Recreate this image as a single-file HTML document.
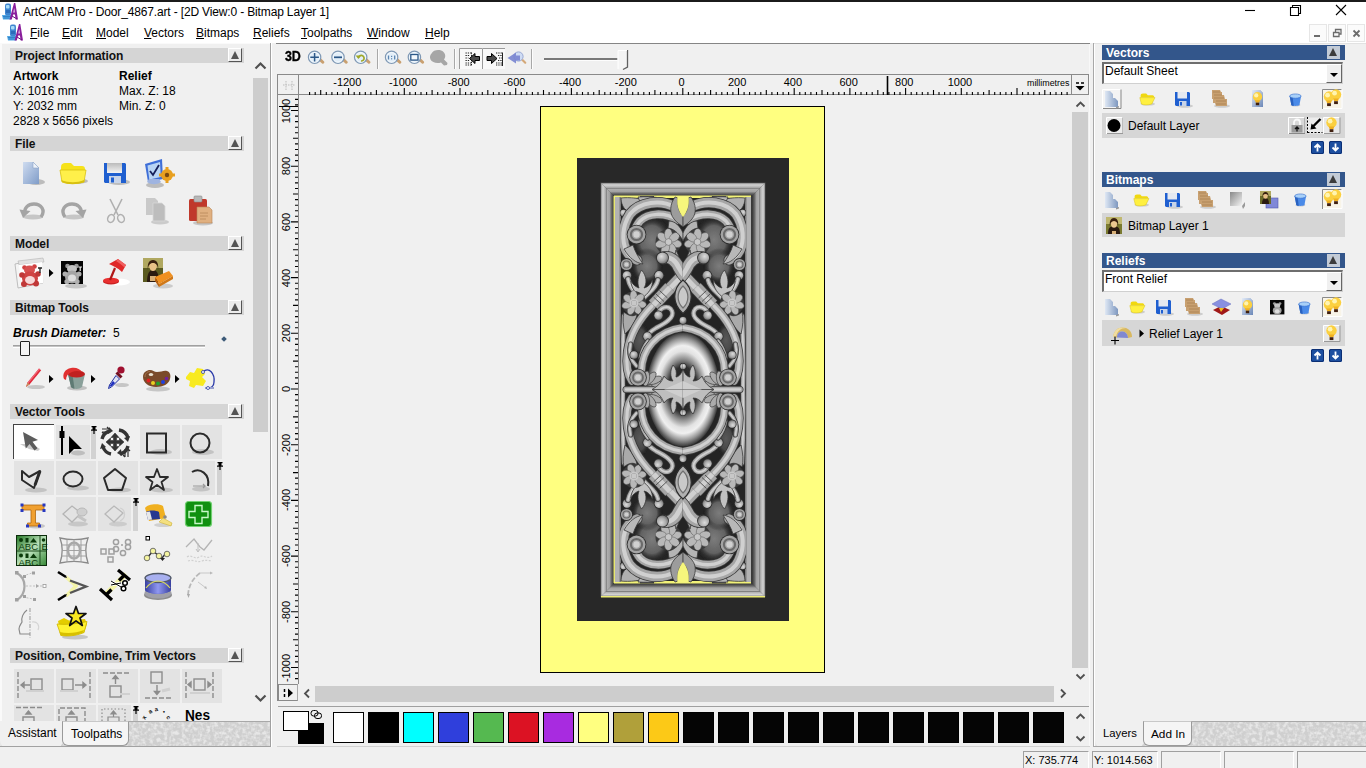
<!DOCTYPE html>
<html><head><meta charset="utf-8"><title>ArtCAM Pro - Door_4867.art</title>
<style>
*{box-sizing:border-box;margin:0;padding:0}
html,body{width:1366px;height:768px;overflow:hidden;background:#f0f0f0;font-family:"Liberation Sans",sans-serif;font-size:12px;color:#000}
div,span,svg{position:absolute}
.t{white-space:nowrap;line-height:14px;height:14px}
.b{font-weight:bold}
.hd{background:#d5d5d5;height:15px}
.hd .t{left:5px;top:1px;font-weight:bold;color:#111;letter-spacing:-0.1px}
.cb{width:14px;height:14px;background:#ececec;border-right:1px solid #555;border-bottom:1px solid #555;border-left:1px solid #fff;border-top:1px solid #fff}
.cb:after{content:"";position:absolute;left:2px;top:2px;border-left:4px solid transparent;border-right:4px solid transparent;border-bottom:8px solid #555}
.cell{background:#e3e3e3}
.pin{background:#d2d2d2;width:5px}
.rh{background:#33568b;height:15px}
.rh .t{left:4px;top:1px;font-weight:bold;color:#fff}
.rcb{width:13px;height:13px;background:#c3cbd6;left:225px;top:1px}
.rcb:after{content:"";position:absolute;left:2px;top:2px;border-left:4.5px solid transparent;border-right:4.5px solid transparent;border-bottom:8px solid #3c3c3c}
.dd{background:#fff;border:1px solid #d0d0d0;border-top:2px solid #6e6e6e;border-left:2px solid #6e6e6e;height:22px}
.ddb{width:16px;height:19px;right:0px;top:0px;background:#f0f0f0;border-right:1px solid #666;border-bottom:1px solid #666;border-left:1px solid #fff;border-top:1px solid #fff}
.ddb:after{content:"";position:absolute;left:3px;top:8px;border-left:4px solid transparent;border-right:4px solid transparent;border-top:4px solid #000}
.lr{background:#d6d6d6}
.sw{width:31px;height:31px;border:1px solid #000;top:712px}
.sb{border:1px solid #fff;border-top-color:#a0a0a0;border-left-color:#a0a0a0}
.rt{font-size:11px;line-height:12px;height:12px;white-space:nowrap;text-align:center;width:40px}
.tab{font-size:12.5px;line-height:14px;white-space:nowrap}
</style></head><body>

<div style="left:0px;top:0px;width:1366px;height:2px;background:#1b1b1b"></div>
<div style="left:0px;top:2px;width:1366px;height:41px;background:#fff"></div>
<svg style="left:2px;top:3px" width="16" height="17" viewBox="0 0 16 17"><path d="M0 12h9v4.500h-8z" fill="#52a8e4"/><path d="M1 13.500h7M1.500 15h6" stroke="#2c78c0" stroke-width="0.800"/><rect x="3" y="0.500" width="6" height="12" rx="2" fill="#3f86d0"/><rect x="4" y="2" width="3.500" height="3.500" rx="1" fill="#a8dcf8"/><rect x="4" y="7" width="4" height="3" fill="#2c6cb8"/><path d="M7.500 16.500L12 0h1.300L16 16.500h-2.300l-0.800-5h-1.800l-1.300 5z" fill="#8a1f9c"/><path d="M11.400 9.500h1.300l-0.500-4.500z" fill="#fff"/><path d="M10 13l5 3" stroke="#6a1080" stroke-width="1"/></svg>
<svg style="left:7px;top:24px" width="16" height="17" viewBox="0 0 16 17"><path d="M0 12h9v4.500h-8z" fill="#52a8e4"/><path d="M1 13.500h7M1.500 15h6" stroke="#2c78c0" stroke-width="0.800"/><rect x="3" y="0.500" width="6" height="12" rx="2" fill="#3f86d0"/><rect x="4" y="2" width="3.500" height="3.500" rx="1" fill="#a8dcf8"/><rect x="4" y="7" width="4" height="3" fill="#2c6cb8"/><path d="M7.500 16.500L12 0h1.300L16 16.500h-2.300l-0.800-5h-1.800l-1.300 5z" fill="#8a1f9c"/><path d="M11.400 9.500h1.300l-0.500-4.500z" fill="#fff"/><path d="M10 13l5 3" stroke="#6a1080" stroke-width="1"/></svg>
<div class="t" style="left:23px;top:5px;letter-spacing:-0.15px">ArtCAM Pro - Door_4867.art - [2D View:0 - Bitmap Layer 1]</div>
<div class="t" style="left:30px;top:26px"><u>F</u>ile</div>
<div class="t" style="left:62px;top:26px"><u>E</u>dit</div>
<div class="t" style="left:96px;top:26px"><u>M</u>odel</div>
<div class="t" style="left:144px;top:26px"><u>V</u>ectors</div>
<div class="t" style="left:196px;top:26px"><u>B</u>itmaps</div>
<div class="t" style="left:253px;top:26px"><u>R</u>eliefs</div>
<div class="t" style="left:301px;top:26px"><u>T</u>oolpaths</div>
<div class="t" style="left:367px;top:26px"><u>W</u>indow</div>
<div class="t" style="left:425px;top:26px"><u>H</u>elp</div>
<svg style="left:1240px;top:2px" width="120" height="20" viewBox="0 0 120 20"><g fill="none" stroke="#000" stroke-width="1.1"><path d="M5 8.5h10"/><path d="M50.500 5.500h8v8h-8z M52.500 5.500v-2h8v8h-2"/><path d="M96 3l10 10M106 3l-10 10"/></g></svg>
<div style="left:1309px;top:24px;width:18px;height:18px;background:#fbfbfb;border:1px solid #e6e6e6"></div>
<div style="left:1328px;top:24px;width:18px;height:18px;background:#fbfbfb;border:1px solid #e6e6e6"></div>
<div style="left:1347px;top:24px;width:18px;height:18px;background:#fbfbfb;border:1px solid #e6e6e6"></div>
<svg style="left:1309px;top:24px" width="57" height="18" viewBox="0 0 57 18"><g fill="none" stroke="#6c6c6c"><path d="M5 12h6" stroke-width="2"/><path d="M24.500 8.5h5.5v4h-5.5z M26.5 8v-2.500h5.5v4.500h-1.500" stroke-width="1.300"/><path d="M44.500 6.500l6 6M50.500 6.500l-6 6" stroke-width="1.800"/></g></svg>
<div style="left:0px;top:43px;width:271px;height:705px;background:#f0f0f0"></div>
<div style="left:0px;top:43px;width:271px;height:1px;background:#fafafa"></div>
<div style="left:0px;top:44px;width:1.5px;height:703px;background:#fafafa"></div>
<div class="hd" style="left:10px;top:48px;width:234px;height:15px;"><div class="t">Project Information</div><div class="cb" style="left:218px;top:0px"></div></div>
<div class="hd" style="left:10px;top:136px;width:234px;height:15px;"><div class="t">File</div><div class="cb" style="left:218px;top:0px"></div></div>
<div class="hd" style="left:10px;top:236px;width:234px;height:15px;"><div class="t">Model</div><div class="cb" style="left:218px;top:0px"></div></div>
<div class="hd" style="left:10px;top:300px;width:234px;height:15px;"><div class="t">Bitmap Tools</div><div class="cb" style="left:218px;top:0px"></div></div>
<div class="hd" style="left:10px;top:404px;width:234px;height:15px;"><div class="t">Vector Tools</div><div class="cb" style="left:218px;top:0px"></div></div>
<div class="hd" style="left:10px;top:648px;width:234px;height:15px;"><div class="t">Position, Combine, Trim Vectors</div><div class="cb" style="left:218px;top:0px"></div></div>
<div class="t b" style="left:13px;top:69px">Artwork</div><div class="t b" style="left:119px;top:69px">Relief</div>
<div class="t" style="left:13px;top:84px">X: 1016 mm</div><div class="t" style="left:119px;top:84px">Max. Z: 18</div>
<div class="t" style="left:13px;top:99px">Y: 2032 mm</div><div class="t" style="left:119px;top:99px">Min. Z: 0</div>
<div class="t" style="left:13px;top:114px">2828 x 5656 pixels</div>
<div class="t b" style="left:13px;top:326px;font-style:italic">Brush Diameter:</div><div class="t" style="left:113px;top:326px">5</div>
<div style="left:13px;top:345px;width:192px;height:3px;background:#c4c4c4;border-top:1px solid #a0a0a0;border-bottom:1px solid #fff"></div>
<div style="left:20px;top:341px;width:10px;height:15px;background:#f4f4f4;border:1px solid #222;border-radius:1px"></div>
<div style="left:222px;top:337px;width:4px;height:4px;background:#3c5a78;transform:rotate(45deg)"></div>
<div style="left:252px;top:48px;width:17px;height:672px;background:#f0f0f0"></div>
<div style="left:253px;top:78px;width:15px;height:354px;background:#cdcdcd"></div>
<svg style="left:252px;top:57px" width="17" height="17" viewBox="0 0 17 17"><path d="M3.500 11.500l5-5l5 5" fill="none" stroke="#505050" stroke-width="2.200"/></svg>
<svg style="left:252px;top:690px" width="17" height="17" viewBox="0 0 17 17"><path d="M3.500 5.500l5 5l5-5" fill="none" stroke="#505050" stroke-width="2.200"/></svg>
<div style="left:13px;top:424px;width:41px;height:35px;background:#fff;border-left:1px solid #444;border-top:1px solid #444"></div>
<div class="cell" style="left:56px;top:425px;width:34px;height:34px;"></div>
<div class="pin" style="left:91px;top:431px;width:5px;height:28px;"></div>
<div class="cell" style="left:140px;top:425px;width:40px;height:34px;"></div>
<div class="cell" style="left:182px;top:425px;width:40px;height:34px;"></div>
<div class="cell" style="left:14px;top:461px;width:40px;height:34px;"></div>
<div class="cell" style="left:56px;top:461px;width:40px;height:34px;"></div>
<div class="cell" style="left:98px;top:461px;width:40px;height:34px;"></div>
<div class="cell" style="left:140px;top:461px;width:40px;height:34px;"></div>
<div class="cell" style="left:182px;top:461px;width:33px;height:34px;"></div>
<div class="pin" style="left:217px;top:467px;width:5px;height:28px;"></div>
<div class="cell" style="left:56px;top:497px;width:40px;height:34px;"></div>
<div class="cell" style="left:98px;top:497px;width:33px;height:34px;"></div>
<div class="pin" style="left:133px;top:503px;width:5px;height:28px;"></div>
<div class="cell" style="left:14px;top:669px;width:40px;height:34px;"></div>
<div class="cell" style="left:56px;top:669px;width:40px;height:34px;"></div>
<div class="cell" style="left:98px;top:669px;width:40px;height:34px;"></div>
<div class="cell" style="left:140px;top:669px;width:40px;height:34px;"></div>
<div class="cell" style="left:182px;top:669px;width:40px;height:34px;"></div>
<div class="cell" style="left:14px;top:705px;width:40px;height:16px;"></div>
<div class="cell" style="left:56px;top:705px;width:40px;height:16px;"></div>
<div class="cell" style="left:98px;top:705px;width:33px;height:16px;"></div>
<div class="pin" style="left:133px;top:711px;width:5px;height:10px;"></div>
<svg style="left:18px;top:158px" width="30" height="30" viewBox="0 0 30 30"><ellipse cx="18" cy="24" rx="9" ry="3" fill="#888" opacity="0.5"/><path d="M5 4h10l6 6v16h-16z" fill="#a9bddb"/><path d="M5 4h10l6 6v16h-16z" fill="url(#gnew)"/><path d="M15 4v6h6z" fill="#eef3fa" stroke="#8fa6c8" stroke-width="0.600"/><defs><linearGradient id="gnew" x1="0" y1="0" x2="1" y2="1"><stop offset="0" stop-color="#cfdcf0"/><stop offset="1" stop-color="#7f9cc8"/></linearGradient></defs></svg>
<svg style="left:58px;top:158px" width="32" height="30" viewBox="0 0 32 30"><ellipse cx="18" cy="23" rx="12" ry="3" fill="#888" opacity="0.5"/><path d="M3 9c0-3 2-4 4-4h6l3 3h8c2 0 3 1 3 3v2h-24z" fill="#f6e21a"/><path d="M2 12h26l-2 12c-8 2-16 2-22 0z" fill="#fff04a" stroke="#d8c010" stroke-width="0.800"/><path d="M3 22c8 3 16 3 23 0l0.300 2c-8 3-16 3-22 0z" fill="#d8c010"/></svg>
<svg style="left:100px;top:158px" width="32" height="30" viewBox="0 0 32 30"><ellipse cx="19" cy="24" rx="11" ry="3" fill="#888" opacity="0.5"/><path d="M4 5h21l1 1v19h-21l-1-1z" fill="#1f5fd0"/><rect x="7" y="5" width="15" height="10" fill="#e4e4e4"/><rect x="7" y="5" width="15" height="10" fill="url(#gsv)"/><rect x="9" y="18" width="12" height="7" fill="#c8d4e8"/><rect x="11" y="19.500" width="3" height="5" fill="#1f5fd0"/><defs><linearGradient id="gsv" x1="0" y1="0" x2="0" y2="1"><stop offset="0" stop-color="#bbb"/><stop offset="1" stop-color="#f4f4f4"/></linearGradient></defs></svg>
<svg style="left:141px;top:156px" width="34" height="34" viewBox="0 0 34 34"><ellipse cx="14" cy="29" rx="9" ry="3" fill="#888" opacity="0.5"/><path d="M4 8l17-5l1 20l-15 3z" fill="#3f6fd8"/><path d="M6.500 9.500l12.500-3.500l0.800 15l-11.500 2.500z" fill="#b8d4f4"/><path d="M9 15l3 4l6-10" fill="none" stroke="#16205a" stroke-width="1.800"/><path d="M6 26c4 3 10 3 14 0l-2-3h-10z" fill="#9fb4e0"/><circle cx="26" cy="19" r="6" fill="#e8a020"/><circle cx="26" cy="19" r="2.200" fill="#7a4a10"/><g fill="#e8a020"><rect x="24.500" y="11" width="3" height="3"/><rect x="24.500" y="24" width="3" height="3"/><rect x="18" y="17.500" width="3" height="3"/><rect x="31" y="17.500" width="3" height="3"/></g></svg>
<svg style="left:18px;top:198px" width="30" height="26" viewBox="0 0 30 26"><ellipse cx="15" cy="19" rx="10" ry="2.5" fill="#888" opacity="0.4"/><path d="M23 19c5-7 0-13-7-13c-6 0-10 4-9 9" fill="none" stroke="#a4a4a4" stroke-width="3.400"/><path d="M1.500 11.500l11 1.500l-7.500 7z" fill="#a4a4a4"/></svg>
<svg style="left:58px;top:198px" width="30" height="26" viewBox="0 0 30 26"><ellipse cx="16" cy="19" rx="10" ry="2.5" fill="#888" opacity="0.4"/><path d="M7 19c-5-7 0-13 7-13c6 0 10 4 9 9" fill="none" stroke="#a4a4a4" stroke-width="3.400"/><path d="M28.500 11.500l-11 1.500l7.500 7z" fill="#a4a4a4"/></svg>
<svg style="left:102px;top:196px" width="28" height="30" viewBox="0 0 28 30"><path d="M8 3l8 16M20 3l-8 16" stroke="#b0b0b0" stroke-width="1.600" fill="none"/><ellipse cx="9" cy="22.500" rx="3.200" ry="4" fill="none" stroke="#b0b0b0" stroke-width="1.500" transform="rotate(25 9 22.500)"/><ellipse cx="19" cy="22.500" rx="3.200" ry="4" fill="none" stroke="#b0b0b0" stroke-width="1.500" transform="rotate(-25 19 22.500)"/></svg>
<svg style="left:142px;top:195px" width="30" height="30" viewBox="0 0 30 30"><ellipse cx="18" cy="27" rx="9" ry="2.5" fill="#888" opacity="0.35"/><path d="M4 3h9l3 3v14h-12z" fill="#c9c9c9"/><path d="M11 8h9l3 3v15h-12z" fill="#bdbdbd" stroke="#d8d8d8" stroke-width="0.800"/></svg>
<svg style="left:186px;top:194px" width="30" height="32" viewBox="0 0 30 32"><ellipse cx="17" cy="29" rx="10" ry="2.5" fill="#888" opacity="0.4"/><rect x="3" y="5" width="18" height="22" rx="1.500" fill="#c0392b"/><rect x="8" y="2" width="8" height="6" rx="1" fill="#b8b8b8" stroke="#8a8a8a" stroke-width="0.600"/><path d="M11 13h12l3 3v13h-15z" fill="#e0b080" stroke="#b88858" stroke-width="0.600"/><path d="M14 19h8M14 22h8M14 25h6" stroke="#b88858" stroke-width="0.800"/></svg>
<svg style="left:12px;top:256px" width="44" height="34" viewBox="0 0 44 34"><path d="M3 8l26-5l2 24l-25 5z" fill="#f4f4f4" stroke="#b0b0b0" stroke-width="0.800"/><path d="M6 5l25-3l1 4l-25 3z" fill="#e2e2e2" stroke="#aaa" stroke-width="0.500"/><path d="M7 9l23-3l1.500 21l-22 3z" fill="#fff"/><circle cx="12.500" cy="11.500" r="2.300" fill="#d04040"/><circle cx="22.500" cy="10.500" r="2.300" fill="#d04040"/><ellipse cx="17.500" cy="14" rx="5.500" ry="4.500" fill="#d85050"/><ellipse cx="18" cy="22.500" rx="8" ry="7" fill="#d04444"/><circle cx="10" cy="19" r="2.800" fill="#c03838"/><circle cx="26" cy="18" r="2.800" fill="#c03838"/><circle cx="12" cy="28" r="3" fill="#c03838"/><circle cx="24" cy="27.500" r="3" fill="#c03838"/><ellipse cx="18" cy="24" rx="5" ry="4" fill="#f6d8d8"/><path d="M26 12h4M28 12v5" stroke="#222" stroke-width="1.300"/><g transform="translate(37,13)"><path d="M0 0l4.500 4l-4.500 4z" fill="#000"/></g></svg>
<svg style="left:60px;top:259px" width="28" height="30" viewBox="0 0 28 30"><ellipse cx="16" cy="27" rx="11" ry="2.5" fill="#888" opacity="0.4"/><rect x="1" y="2" width="22" height="23" fill="#050505"/><circle cx="7.500" cy="7" r="2.300" fill="#9a9a9a"/><circle cx="16.500" cy="7" r="2.300" fill="#9a9a9a"/><ellipse cx="12" cy="10" rx="5" ry="4" fill="#c4c4c4"/><ellipse cx="12" cy="18" rx="7" ry="6.500" fill="#a4a4a4"/><circle cx="5" cy="15" r="2.500" fill="#b0b0b0"/><circle cx="19" cy="15" r="2.500" fill="#b0b0b0"/><circle cx="7" cy="22.500" r="2.600" fill="#b0b0b0"/><circle cx="17" cy="22.500" r="2.600" fill="#b0b0b0"/><ellipse cx="12" cy="19" rx="4" ry="3.500" fill="#ddd"/><path d="M18.500 8h3.500M20.200 8v4" stroke="#eee" stroke-width="1.200"/></svg>
<svg style="left:98px;top:257px" width="34" height="32" viewBox="0 0 34 32"><ellipse cx="20" cy="25" rx="12" ry="3.500" fill="#fff"/><ellipse cx="13" cy="24.500" rx="8" ry="3" fill="#c82020"/><ellipse cx="13" cy="23.500" rx="8" ry="2.800" fill="#e83030"/><path d="M12 23l5-12" stroke="#b01818" stroke-width="2.200"/><path d="M11 7l9-5l8 6l-4 7c-4-4-9-6-13-8z" fill="#e02828"/><path d="M20 2l8 6l-1.500 2.500c-3-3-6-5-8.500-6.500z" fill="#f06060"/></svg>
<svg style="left:141px;top:256px" width="34" height="34" viewBox="0 0 34 34"><ellipse cx="22" cy="30" rx="10" ry="2.5" fill="#888" opacity="0.35"/><rect x="2" y="2" width="20" height="24" fill="#5a5a20"/><rect x="2" y="2" width="20" height="10" fill="#b0a860"/><path d="M6 26c0-8 2-12 6-12s6 4 6 12z" fill="#2a1a10"/><ellipse cx="12" cy="10.500" rx="3.600" ry="4.600" fill="#e8c088"/><path d="M7 14c-1-6 1-10 5-10s6 4 5 10c0-5-2-7-5-7s-5 2-5 7z" fill="#3a2010"/><path d="M9 20h6v5h-6z" fill="#d8b078"/><path d="M14 21l14-6l4 5l-14 8z" fill="#f09020"/><path d="M14 21l4 7l0 3l-4-6z" fill="#b86010"/><path d="M18 28l14-8v3l-14 8z" fill="#d07818"/></svg>
<svg style="left:20px;top:365px" width="36" height="28" viewBox="0 0 36 28"><ellipse cx="16" cy="22" rx="9" ry="2" fill="#888" opacity="0.4"/><path d="M6 22l1.500-4.500l11.500-14l2.200 1.800l-11.500 14z" fill="#e02838"/><path d="M6 22l1.500-4.500l2.200 1.800z" fill="#c89060"/><path d="M7.500 17.500l11.500-14l1 0.800l-11.500 14z" fill="#f06878"/><g transform="translate(29,10)"><path d="M0 0l4.500 4l-4.500 4z" fill="#000"/></g></svg>
<svg style="left:60px;top:365px" width="38" height="28" viewBox="0 0 38 28"><ellipse cx="17" cy="23" rx="10" ry="2.5" fill="#888" opacity="0.45"/><path d="M8 9l3 13c3 2.500 8 2.500 11 0l3-13z" fill="#8aa09a"/><path d="M8 9l3 13c1 1 2 1.500 3.500 1.800l-2-14z" fill="#5f7a74"/><ellipse cx="16.500" cy="9" rx="8.500" ry="3.500" fill="#c02020"/><path d="M4 14c-2-5 1-10 7-11c5-1 9 1 11 4c-3-1.500-7-1.500-10 0c-4 1.500-6 4-6 8z" fill="#e03030"/><g transform="translate(31,10)"><path d="M0 0l4.500 4l-4.500 4z" fill="#000"/></g></svg>
<svg style="left:104px;top:363px" width="28" height="30" viewBox="0 0 28 30"><ellipse cx="18" cy="22" rx="7" ry="2" fill="#888" opacity="0.4"/><circle cx="17" cy="7" r="3.600" fill="#a01030"/><path d="M12.500 9.500l5 5" stroke="#701020" stroke-width="3"/><path d="M12 12.500l3.500 3.500l-8 8l-3 1.500l1-3.500z" fill="#e0e4f4" stroke="#2030a0" stroke-width="1"/><path d="M5 24l3-1l3-3l-2-2z" fill="#2030c0"/></svg>
<svg style="left:140px;top:365px" width="44" height="28" viewBox="0 0 44 28"><ellipse cx="18" cy="24" rx="12" ry="2.5" fill="#888" opacity="0.4"/><path d="M3 12c0-5 4-7 7-7c3 0 4 2 7 2c4 0 7-2 10-1c3 1 4 4 3 8c-1 5-7 8-14 8c-7 0-13-4-13-10z" fill="#7a4a2a"/><path d="M5 12c0-4 3-5.500 5-5.500" fill="none" stroke="#a87850" stroke-width="1"/><circle cx="8.500" cy="15.500" r="2" fill="#e02020"/><circle cx="13" cy="18" r="2" fill="#e8d020"/><circle cx="18" cy="18.500" r="2" fill="#20a030"/><circle cx="23" cy="17" r="2" fill="#2040e0"/><circle cx="26.500" cy="13.500" r="1.800" fill="#7020a0"/><ellipse cx="11" cy="9.500" rx="2.200" ry="1.600" fill="#e8e0d0"/><g transform="translate(35,10)"><path d="M0 0l4.500 4l-4.500 4z" fill="#000"/></g></svg>
<svg style="left:183px;top:364px" width="34" height="30" viewBox="0 0 34 30"><path d="M20 8c6-6 12 2 11 10c0 4-3 6-6 6" fill="none" stroke="#2838a8" stroke-width="1.300"/><path d="M22 24h9" stroke="#98a0d0" stroke-width="2"/><path d="M3 13l4-5l4 1l3-5l6 1l2 5l-3 3l4 4l-3 5l-7-1l-2 3l-5-2l1-5l-4-2z" fill="#f8ea20"/><circle cx="20" cy="8" r="1.500" fill="#fff" stroke="#2838a8" stroke-width="0.800"/><circle cx="25" cy="24" r="1.500" fill="#fff" stroke="#2838a8" stroke-width="0.800"/></svg>
<svg style="left:16px;top:428px" width="28" height="28" viewBox="0 0 28 28"><path d="M4 16l9 5l9 2l2-2l-8-5z" fill="#b4b4b4" opacity="0.700"/><path d="M7 4l15 8l-5.500 1.700l5 6.500l-3 2.300l-5-6.500l-3.700 4.500z" fill="#5c5c5c"/></svg>
<svg style="left:56px;top:425px" width="36" height="34" viewBox="0 0 36 34"><ellipse cx="22" cy="28" rx="7" ry="2.5" fill="#888" opacity="0.4"/><path d="M6 1v29" stroke="#000" stroke-width="2"/><rect x="3.500" y="6" width="5" height="7" fill="#000"/><path d="M13 11v18l5-5h8z" fill="#000"/></svg>
<svg style="left:91px;top:426px" width="7" height="8" viewBox="0 0 7 8"><path d="M0.500 0h5v1.200h-1v2.300h1.500v1.300h-2.400v3.200h-1.200v-3.200h-2.400v-1.300h1.500v-2.300h-1z" fill="#000"/></svg>
<svg style="left:97px;top:425px" width="36" height="34" viewBox="0 0 36 34"><g fill="none" stroke="#333" stroke-width="3.400"><path d="M5 14a11 11 0 0 1 8-8"/><path d="M22 5a11 11 0 0 1 9 8"/><path d="M31 21a11 11 0 0 1-8 8"/><path d="M14 29a11 11 0 0 1-8-7"/></g><g fill="#333"><path d="M12 2l4 4l-5 3z"/><path d="M33 11l-2 6l-4-4z"/><path d="M25 31l-5-3l4-4z"/><path d="M3 24l2-6l4 4z"/></g><path d="M18 8l4 4.500h-2.500v3h3v-2.500l4.500 4l-4.500 4v-2.500h-3v3h2.500l-4 4.500l-4-4.500h2.500v-3h-3v2.500l-4.500-4l4.500-4v2.500h3v-3h-2.500z" fill="#333" stroke="#333" stroke-width="0.600"/><path d="M5 4h7M12 4l-2-2M5 7h7M5 7l2 2" stroke="#333" stroke-width="1.200" fill="none"/><path d="M28 24v8M28 32l-2-2M31 24v8M31 24l2 2" stroke="#333" stroke-width="1.200" fill="none"/></svg>
<svg style="left:142px;top:429px" width="36" height="28" viewBox="0 0 36 28"><ellipse cx="19" cy="23" rx="11" ry="3" fill="#888" opacity="0.35"/><rect x="5" y="4.500" width="19" height="19" fill="none" stroke="#2a2a2a" stroke-width="2"/></svg>
<svg style="left:184px;top:429px" width="36" height="28" viewBox="0 0 36 28"><ellipse cx="19" cy="23" rx="11" ry="3" fill="#888" opacity="0.35"/><circle cx="16" cy="14" r="9.500" fill="none" stroke="#2a2a2a" stroke-width="2"/></svg>
<svg style="left:16px;top:465px" width="36" height="30" viewBox="0 0 36 30"><ellipse cx="20" cy="25" rx="11" ry="2.5" fill="#888" opacity="0.35"/><path d="M6 6l7 6l11-6l-6 17l-12-8z" fill="none" stroke="#2a2a2a" stroke-width="2" stroke-linejoin="round"/><path d="M24 6l-5 14" stroke="#2a2a2a" stroke-width="3"/></svg>
<svg style="left:58px;top:465px" width="36" height="30" viewBox="0 0 36 30"><ellipse cx="20" cy="23" rx="11" ry="2.5" fill="#888" opacity="0.35"/><ellipse cx="15" cy="14" rx="9.500" ry="7.500" fill="none" stroke="#2a2a2a" stroke-width="2"/></svg>
<svg style="left:100px;top:465px" width="36" height="30" viewBox="0 0 36 30"><ellipse cx="20" cy="25" rx="11" ry="2.5" fill="#888" opacity="0.35"/><path d="M15 4l11 9l-4 12h-14l-4-12z" fill="none" stroke="#2a2a2a" stroke-width="2" stroke-linejoin="round"/></svg>
<svg style="left:142px;top:465px" width="36" height="30" viewBox="0 0 36 30"><ellipse cx="20" cy="25" rx="11" ry="2.5" fill="#888" opacity="0.35"/><path d="M15 4l3 8h8l-6.500 5l2.500 8l-7-5l-7 5l2.500-8l-6.500-5h8z" fill="none" stroke="#2a2a2a" stroke-width="1.800" stroke-linejoin="round"/></svg>
<svg style="left:184px;top:465px" width="32" height="30" viewBox="0 0 32 30"><ellipse cx="17" cy="24" rx="9" ry="2.5" fill="#888" opacity="0.35"/><path d="M8 7c8-5 18 2 16 14" fill="none" stroke="#2a2a2a" stroke-width="2"/><path d="M9 21h12l-2-2M21 21l-2 2" stroke="#999" stroke-width="1.200" fill="none"/></svg>
<svg style="left:217px;top:462px" width="7" height="8" viewBox="0 0 7 8"><path d="M0.500 0h5v1.200h-1v2.300h1.500v1.300h-2.400v3.200h-1.200v-3.200h-2.400v-1.300h1.500v-2.300h-1z" fill="#000"/></svg>
<svg style="left:16px;top:500px" width="36" height="30" viewBox="0 0 36 30"><ellipse cx="20" cy="26" rx="9" ry="2.5" fill="#888" opacity="0.4"/><path d="M6 5h22v5h-8.500v13h4v3h-12v-3h3.500v-13h-9z" fill="#f0a030" stroke="#b06810" stroke-width="0.800"/><g fill="#2838c0"><rect x="4.500" y="3.500" width="3" height="3"/><rect x="26.500" y="3.500" width="3" height="3"/><rect x="4.500" y="9" width="3" height="3"/><rect x="26.500" y="9" width="3" height="3"/><rect x="10" y="24.500" width="3" height="3"/><rect x="22" y="24.500" width="3" height="3"/></g></svg>
<svg style="left:58px;top:500px" width="36" height="30" viewBox="0 0 36 30"><ellipse cx="20" cy="24" rx="10" ry="2.5" fill="#888" opacity="0.3"/><path d="M5 14l9-8l9 7l-9 9z" fill="none" stroke="#b4b4b4" stroke-width="1.300"/><ellipse cx="24" cy="12" rx="5" ry="4" fill="#cfcfcf" stroke="#b8b8b8"/><path d="M20 16l8 5" stroke="#c4c4c4" stroke-width="3"/></svg>
<svg style="left:100px;top:500px" width="32" height="30" viewBox="0 0 32 30"><ellipse cx="18" cy="24" rx="9" ry="2.5" fill="#888" opacity="0.25"/><path d="M5 14l9-8l9 7l-9 9z" fill="none" stroke="#b8b8b8" stroke-width="1.300"/><path d="M20 8c6 2 6 10 0 13" fill="none" stroke="#d0d0d0" stroke-width="1.300"/></svg>
<svg style="left:133px;top:498px" width="7" height="8" viewBox="0 0 7 8"><path d="M0.500 0h5v1.200h-1v2.300h1.500v1.300h-2.400v3.200h-1.200v-3.200h-2.400v-1.300h1.500v-2.300h-1z" fill="#000"/></svg>
<svg style="left:141px;top:500px" width="34" height="30" viewBox="0 0 34 30"><ellipse cx="22" cy="25" rx="9" ry="2" fill="#888" opacity="0.3"/><path d="M4 8c2-4 14-5 18-2l3 12l-17 3z" fill="#f0b020"/><path d="M5 12c3-2 10-2 13 0l1 7l-12 1z" fill="#283890"/><path d="M5 12l2 8l4-0.500l-2-8z" fill="#e8e8e8"/><path d="M22 18l9 5l-1 3l-12-4z" fill="#f4e080" stroke="#c8a820" stroke-width="0.500"/><circle cx="24" cy="17" r="1.800" fill="#888"/></svg>
<svg style="left:184px;top:500px" width="30" height="28" viewBox="0 0 30 28"><rect x="1.500" y="1.500" width="26" height="25" rx="3" fill="#109010" stroke="#70d070" stroke-width="1.200"/><path d="M11 5.500h7v6h6v6h-6v6h-7v-6h-6v-6h6z" fill="none" stroke="#c8f8c8" stroke-width="1.400"/></svg>
<svg style="left:16px;top:535px" width="32" height="31" viewBox="0 0 32 31"><rect x="1" y="1" width="29" height="29" fill="#9fd09f"/><rect x="1" y="1" width="29" height="29" fill="url(#gabc)"/><path d="M1 16h29M24 1v29" stroke="#1a4a1a" stroke-width="1"/><g fill="#0a3a0a"><circle cx="5" cy="5" r="2"/><rect x="9.500" y="3" width="3" height="4.500"/><path d="M14 7.500l3.500-4.500l3.500 4.500z"/><circle cx="5" cy="20.500" r="2"/><rect x="9.500" y="18.500" width="3" height="4.500"/><path d="M14 23l3.500-4.500l3.500 4.500z"/><circle cx="27.500" cy="5" r="1.800"/></g><text x="2.500" y="15" font-family="Liberation Sans,sans-serif" font-size="9.500" fill="#0a3a0a">ABC</text><text x="2.500" y="31" font-family="Liberation Sans,sans-serif" font-size="9.500" fill="#0a3a0a">ABC</text><text x="25.500" y="15" font-family="Liberation Sans,sans-serif" font-size="9.500" fill="#0a3a0a">E</text><rect x="0.500" y="0.500" width="30" height="30" fill="none" stroke="#0c2c0c" stroke-width="1"/><defs><linearGradient id="gabc" x1="0" y1="0" x2="1" y2="1"><stop offset="0" stop-color="#2a7a2a"/><stop offset="0.5" stop-color="#b8e0b8"/><stop offset="1" stop-color="#3a8a3a"/></linearGradient></defs></svg>
<svg style="left:58px;top:535px" width="32" height="30" viewBox="0 0 32 30"><path d="M2 3c9 2 19 2 28 0c-3 8-3 16 0 25c-9-2-19-2-28 0c3-9 3-17 0-25z" fill="none" stroke="#8a8a8a" stroke-width="1.300"/><path d="M9 4v23M16 4.500v22M23 4v23M3 10h26M4 15.500h24M3 21h26" stroke="#9a9a9a" stroke-width="0.900"/><ellipse cx="16" cy="15.500" rx="6" ry="8" fill="none" stroke="#a8a8a8" stroke-width="2.400"/></svg>
<svg style="left:98px;top:535px" width="34" height="30" viewBox="0 0 34 30"><g fill="none" stroke="#a0a0a0" stroke-width="1.500"><rect x="3" y="14" width="5" height="5"/><rect x="11" y="14" width="5" height="5"/><rect x="10" y="22" width="5" height="5"/><circle cx="18" cy="7" r="2.600"/><circle cx="30" cy="7" r="2.600"/><circle cx="18" cy="14" r="2.600"/><circle cx="25" cy="18" r="2.600"/><circle cx="30" cy="12" r="2.600"/></g><circle cx="24" cy="10" r="1" fill="#a0a0a0"/></svg>
<svg style="left:141px;top:533px" width="34" height="32" viewBox="0 0 34 32"><rect x="5" y="3.500" width="3.500" height="3.500" fill="#fff" stroke="#000" stroke-width="1"/><path d="M6 25l6-7l6 5l3 2l5-6" fill="none" stroke="#333" stroke-width="1.500"/><g fill="#f4f4a0" stroke="#555" stroke-width="0.800"><circle cx="6" cy="25" r="2.800"/><circle cx="12" cy="18" r="2.800"/><circle cx="18" cy="23" r="2.800"/><circle cx="26" cy="21" r="2.800"/></g><path d="M19 25l2.500 3l2.500-3" fill="#222"/></svg>
<svg style="left:184px;top:535px" width="32" height="30" viewBox="0 0 32 30"><path d="M2 12l8-8l6 8l4 3l8-10" fill="none" stroke="#b4b4b4" stroke-width="1.300"/><path d="M14 8v8M12 14l2 3l2-3" stroke="#c0c0c0" stroke-width="1" fill="none"/><path d="M3 22c4-3 8 3 12 0s8 3 13-1M4 26c5-2 9 2 14 0s7 1 10-1" stroke="#d0d0d0" stroke-width="1.200" fill="none" stroke-dasharray="2 1.500"/></svg>
<svg style="left:14px;top:570px" width="36" height="32" viewBox="0 0 36 32"><path d="M3 3c10 6 10 20 0 27" fill="none" stroke="#a8a8a8" stroke-width="2.200"/><path d="M9 6l9-3M9 27l10 2M12 16h16" stroke="#c0c0c0" stroke-width="1" stroke-dasharray="2 1.500"/><g fill="#a0a0a0"><rect x="1" y="1" width="3.500" height="3.500"/><rect x="1" y="28" width="3.500" height="3.500"/><rect x="9" y="5" width="3" height="3"/><rect x="9" y="25" width="3" height="3"/><rect x="18" y="1.500" width="3" height="3"/><rect x="19" y="28" width="3" height="3"/></g><rect x="29" y="14.500" width="3" height="3" fill="#fff" stroke="#999" stroke-width="0.800"/><path d="M22 14l3 2l-3 2z" fill="#a8a8a8"/></svg>
<svg style="left:56px;top:570px" width="34" height="32" viewBox="0 0 34 32"><path d="M10 7l10 9l-10 10" stroke="#f4f4a8" stroke-width="3.500" fill="none"/><path d="M2 2l8 5M2 30l8-5" stroke="#000" stroke-width="2.600"/><path d="M10 7l2 2M10 25l2-2" stroke="#555" stroke-width="1" stroke-dasharray="1.500 1.500"/><path d="M14 10.500l16 6l-16 6.500" fill="none" stroke="#555" stroke-width="2.400" stroke-linejoin="miter"/></svg>
<svg style="left:98px;top:568px" width="36" height="34" viewBox="0 0 36 34"><path d="M8 26l20-20" stroke="#f4f4a8" stroke-width="5"/><path d="M2 21l12 11M20 2l12 10" stroke="#000" stroke-width="3.200"/><path d="M8 27l5.500-5.500M26.500 7l-5.500 5.500" stroke="#000" stroke-width="3.200"/><path d="M13 13l10 6M13 17l10-2" stroke="#fff" stroke-width="2.600"/><path d="M13 13l10 6M13 17l10-2" stroke="#000" stroke-width="1"/><circle cx="25.500" cy="20.500" r="2.300" fill="#fff" stroke="#000" stroke-width="1.500"/><circle cx="27" cy="15" r="2.300" fill="#fff" stroke="#000" stroke-width="1.500"/></svg>
<svg style="left:141px;top:570px" width="34" height="32" viewBox="0 0 34 32"><ellipse cx="17" cy="25" rx="14" ry="5" fill="#8c8c8c"/><ellipse cx="17" cy="23" rx="13.500" ry="5.500" fill="#a0a0a8"/><path d="M4 8v12c3 5 23 5 26 0v-12z" fill="#5058c8"/><path d="M4 8v12c3 5 23 5 26 0v-12z" fill="url(#gdish)"/><ellipse cx="17" cy="8" rx="13" ry="4.500" fill="#a8b0f0" stroke="#505868" stroke-width="1.300"/><path d="M5 18c4-5 8-7 12-7s8 2 12 7" fill="none" stroke="#d8d860" stroke-width="1.200"/><defs><linearGradient id="gdish" x1="0" x2="1"><stop offset="0" stop-color="#3840a0"/><stop offset="0.5" stop-color="#9098f0"/><stop offset="1" stop-color="#3840a0"/></linearGradient></defs></svg>
<svg style="left:184px;top:570px" width="32" height="32" viewBox="0 0 32 32"><path d="M16 3c-8 6-12 14-12 24" fill="none" stroke="#b8b8b8" stroke-width="1.800" stroke-dasharray="5 2"/><path d="M16 3h10M14 12l8 6" stroke="#c8c8c8" stroke-width="1" /><path d="M26 1.500l3 1.500l-3 1.500zM22 16l1 3l-3-1z" fill="#b8b8b8"/><path d="M3 24l1.500 4l1.500-4z" fill="#aaa"/></svg>
<svg style="left:16px;top:606px" width="30" height="32" viewBox="0 0 30 32"><path d="M14 2v30" stroke="#999" stroke-width="1" stroke-dasharray="4 1.500 1 1.500"/><path d="M11 4c-4 3-6 8-5 12c-1 2-3 4-3 7l1 5h10" fill="none" stroke="#8a8a8a" stroke-width="1.200"/><path d="M16 16c5-1 8 3 6 8" fill="none" stroke="#d4d4d4" stroke-width="1.200"/></svg>
<svg style="left:56px;top:604px" width="36" height="36" viewBox="0 0 36 36"><ellipse cx="19" cy="33" rx="13" ry="2.5" fill="#888" opacity="0.4"/><path d="M2 17l6-3l5 2.500l16-1.500l2 5l-3 9l-23 2z" fill="#e4cc00"/><path d="M1 20c9 1 20 0 30-2.500l-3 11c-8 3.500-17 4-23 3z" fill="#fff230" stroke="#cdb400" stroke-width="0.800"/><path d="M3.500 28c8 2 17 1 24.500-2l-0.600 2.600c-8 3.500-17 4-23 3z" fill="#d8c000"/><path d="M20 2.500l2.500 7h7.500l-6 4.500l2.300 7.500l-6.300-4.600l-6.300 4.600l2.300-7.500l-6-4.500h7.500z" fill="#f8e820" stroke="#111" stroke-width="1.700" stroke-linejoin="round"/></svg>
<svg style="left:14px;top:669px" width="40" height="34" viewBox="0 0 40 34"><g fill="none" stroke="#8c8c8c" stroke-width="1.400"><path d="M4 3v28" stroke-dasharray="5 2"/><rect x="17" y="10" width="11" height="11"/><path d="M7 16h9M7 16l3-2.500v5z" fill="#8c8c8c"/><path d="M12 22h18" stroke="#d0d0d0" stroke-width="2"/></g></svg>
<svg style="left:56px;top:669px" width="40" height="34" viewBox="0 0 40 34"><g fill="none" stroke="#8c8c8c" stroke-width="1.400"><path d="M34 3v28" stroke-dasharray="5 2"/><rect x="6" y="10" width="11" height="11"/><path d="M19 16h9M30 16l-3-2.500v5z" fill="#8c8c8c"/><path d="M4 22h18" stroke="#d0d0d0" stroke-width="2"/></g></svg>
<svg style="left:98px;top:669px" width="40" height="34" viewBox="0 0 40 34"><g fill="none" stroke="#8c8c8c" stroke-width="1.400"><path d="M5 4h26" stroke-dasharray="5 2"/><rect x="12" y="17" width="11" height="11"/><path d="M17.500 8v7M17.500 6.500l-2.500 3h5z" fill="#8c8c8c"/><path d="M22 25h10" stroke="#d0d0d0" stroke-width="2"/></g></svg>
<svg style="left:140px;top:669px" width="40" height="34" viewBox="0 0 40 34"><g fill="none" stroke="#8c8c8c" stroke-width="1.400"><path d="M5 29h26" stroke-dasharray="5 2"/><rect x="11" y="3" width="11" height="11"/><path d="M17 16v7M17 25.500l-2.500-3h5z" fill="#8c8c8c"/><path d="M22 22l8-2" stroke="#d0d0d0" stroke-width="3"/></g></svg>
<svg style="left:182px;top:669px" width="40" height="34" viewBox="0 0 40 34"><g fill="none" stroke="#8c8c8c" stroke-width="1.400"><path d="M4 3v28M31 3v28" stroke-dasharray="5 2"/><rect x="12" y="10" width="11" height="11"/><path d="M6 15.500l3-2.500v5zM29 15.500l-3-2.500v5z" fill="#8c8c8c"/><path d="M8 24h20" stroke="#d0d0d0" stroke-width="2"/></g></svg>
<svg style="left:14px;top:705px" width="40" height="16" viewBox="0 0 40 16"><g fill="none" stroke="#8c8c8c" stroke-width="1.400"><path d="M2 2.500h26" stroke-dasharray="5 2"/><path d="M14.500 6l-2.500 3h5z" fill="#8c8c8c"/><path d="M9 16v-4h11v4"/></g></svg>
<svg style="left:56px;top:705px" width="40" height="16" viewBox="0 0 40 16"><g fill="none" stroke="#8c8c8c" stroke-width="1.400"><path d="M3 16v-13h26v13" stroke-dasharray="5 2"/><path d="M15.500 6l-2.500 3h5z" fill="#8c8c8c"/><path d="M10 16v-4h11v4"/></g></svg>
<svg style="left:98px;top:705px" width="34" height="16" viewBox="0 0 34 16"><g fill="none" stroke="#8c8c8c" stroke-width="1.200"><path d="M4 16v-12h23v12" stroke-dasharray="1.500 2"/><path d="M15.500 6l-2.500 3h5zM15.500 9v3" fill="#8c8c8c"/><path d="M10 16v-4h11v4"/></g></svg>
<svg style="left:133px;top:706px" width="7" height="8" viewBox="0 0 7 8"><path d="M0.500 0h5v1.200h-1v2.300h1.500v1.300h-2.400v3.200h-1.200v-3.200h-2.400v-1.300h1.500v-2.300h-1z" fill="#000"/></svg>
<svg style="left:141px;top:705px" width="34" height="16" viewBox="0 0 34 16"><g fill="#111" font-family="Liberation Sans,sans-serif" font-size="6" font-weight="bold"><text x="9" y="9" transform="rotate(-35 9 9)">a</text><text x="14" y="6.500" transform="rotate(-10 14 6.500)">a</text><text x="21" y="8" transform="rotate(30 21 8)">•</text><text x="25" y="12" transform="rotate(60 25 12)">c</text><text x="4" y="15" transform="rotate(-60 4 15)">x</text></g></svg>
<svg style="left:184px;top:707px" width="32" height="16" viewBox="0 0 32 16"><text x="1" y="12.500" font-family="Liberation Sans,sans-serif" font-size="14" font-weight="bold" fill="#000" textLength="25" lengthAdjust="spacingAndGlyphs">Nes</text><text x="1" y="23" font-family="Liberation Sans,sans-serif" font-size="14" font-weight="bold" fill="#000" textLength="25" lengthAdjust="spacingAndGlyphs">Nes</text></svg>
<div style="left:0px;top:721px;width:271px;height:26px;background:#cfcfcf"><svg width="100%" height="100%" style="left:0;top:0"><filter id="nz" x="0" y="0" width="100%" height="100%"><feTurbulence type="fractalNoise" baseFrequency="0.28" numOctaves="2" seed="3"/><feColorMatrix type="matrix" values="0 0 0 0 1  0 0 0 0 1  0 0 0 0 1  3 0 0 0 -1.2"/></filter><rect width="100%" height="100%" filter="url(#nz)" opacity="0.5"/></svg></div>
<div style="left:0px;top:721px;width:63px;height:26px;background:#f0f0f0;border-radius:0 0 6px 6px"></div>
<div style="left:62px;top:721px;width:67px;height:25px;background:#f5f5f5;border:1px solid #9a9a9a;border-top:1px solid #c8c8c8;border-radius:0 0 6px 6px"></div>
<div style="left:129px;top:721px;width:142px;height:1px;background:#a8a8a8"></div>
<div class="tab" style="left:8px;top:726px;font-size:12px">Assistant</div><div class="tab" style="left:71px;top:727px;font-size:12px">Toolpaths</div>
<div style="left:0px;top:746px;width:271px;height:1px;background:#a2a2a2"></div>
<div style="left:271px;top:746px;width:823px;height:1px;background:#d2d2d2"></div>
<div style="left:270px;top:43px;width:1px;height:704px;background:#a0a0a0"></div>
<div style="left:271px;top:43px;width:1px;height:704px;background:#fff"></div>
<div style="left:272px;top:43px;width:5px;height:704px;background:#f0f0f0"></div>
<div style="left:276px;top:43px;width:814px;height:1px;background:#858585"></div>
<svg style="left:278px;top:45px" width="360" height="28" viewBox="0 0 360 28"><path d="M40.1 15l4 3.500c1 1 3-0.500 2-2l-3.500-3.500z" fill="#c9a070"/><circle cx="36.6" cy="12.300" r="6.200" fill="#e2eef8" stroke="#7f98b4" stroke-width="1.200"/><circle cx="36.6" cy="12.300" r="4.800" fill="none" stroke="#fff" stroke-width="0.800" opacity="0.700"/><path d="M32.300 12.300h8.600M36.600 8v8.600" stroke="#2c5888" stroke-width="1.500"/><path d="M63.5 15l4 3.500c1 1 3-0.500 2-2l-3.500-3.500z" fill="#c9a070"/><circle cx="60" cy="12.300" r="6.200" fill="#e2eef8" stroke="#7f98b4" stroke-width="1.200"/><circle cx="60" cy="12.300" r="4.800" fill="none" stroke="#fff" stroke-width="0.800" opacity="0.700"/><path d="M56 12.300h8" stroke="#2c5888" stroke-width="1.700"/><path d="M86.2 15l4 3.500c1 1 3-0.500 2-2l-3.500-3.500z" fill="#c9a070"/><circle cx="82.7" cy="12.300" r="6.200" fill="#e2eef8" stroke="#7f98b4" stroke-width="1.200"/><circle cx="82.7" cy="12.300" r="4.800" fill="none" stroke="#fff" stroke-width="0.800" opacity="0.700"/><path d="M80.500 13a2.800 2.800 0 1 1 2.500 3" fill="none" stroke="#a0a828" stroke-width="1.700"/><path d="M77.500 10.500l3 3.500l2.500-3.500z" fill="#a0a828"/><path d="M99.500 4v20" stroke="#a8a8a8"/><path d="M100.500 4v20" stroke="#fcfcfc"/><path d="M117.1 15l4 3.500c1 1 3-0.500 2-2l-3.500-3.500z" fill="#c9a070"/><circle cx="113.6" cy="12.300" r="6.200" fill="#e2eef8" stroke="#7f98b4" stroke-width="1.200"/><circle cx="113.6" cy="12.300" r="4.800" fill="none" stroke="#fff" stroke-width="0.800" opacity="0.700"/><path d="M110.500 10.500v4M116.700 10.500v4" stroke="#5a84b0" stroke-width="1.300"/><rect x="113" y="10.800" width="1.200" height="1.200" fill="#5a84b0"/><rect x="113" y="13.200" width="1.200" height="1.200" fill="#5a84b0"/><path d="M139.9 15l4 3.500c1 1 3-0.500 2-2l-3.500-3.500z" fill="#c9a070"/><circle cx="136.4" cy="12.300" r="6.200" fill="#e2eef8" stroke="#7f98b4" stroke-width="1.200"/><circle cx="136.4" cy="12.300" r="4.800" fill="none" stroke="#fff" stroke-width="0.800" opacity="0.700"/><rect x="132.800" y="9.500" width="7.200" height="5.600" fill="#f4f8fc" stroke="#2c5888" stroke-width="1.300"/><path d="M153.500 8.500c2-4 9-4.500 12-1.500c2.500 2.500 2 5.500 0.500 7.500l3.500 3.500l-0.500 2l-3 0.500l-3-3c-4 1.500-9 0-10.500-3c-1-2.500-0.500-4.500 1-6z" fill="#a6a6a6"/><path d="M176.500 4v20" stroke="#a8a8a8"/><path d="M177.500 4v20" stroke="#fcfcfc"/><rect x="181" y="3" width="23" height="21" fill="#f9f9f9"/><path d="M181.500 24v-20.500h22.500" fill="none" stroke="#9a9a9a"/><rect x="204" y="3" width="23" height="21" fill="#f9f9f9"/><path d="M204.500 24v-20.500h22.500" fill="none" stroke="#9a9a9a"/><path d="M187.500 8h6M187.500 10.500h4M187.500 13h3M187.500 15.500h4M187.500 18h6M187.500 20h6" stroke="#222" stroke-width="1" stroke-dasharray="1.300 1"/><path d="M193.500 7.500v13" stroke="#222" stroke-width="1" stroke-dasharray="1.300 1"/><path d="M201.500 11.500h-4.500v-3l-5.500 5l5.500 5v-3h4.500z" fill="#4a4a4a" stroke="#000" stroke-width="1"/><path d="M218 8h6M220 10.500h4M221 13h3M220 15.500h4M218 18h6M218 20h6" stroke="#222" stroke-width="1" stroke-dasharray="1.300 1"/><path d="M224.500 7.500v13.500" stroke="#222" stroke-width="1"/><path d="M209 11.500h4.500v-3l5.500 5l-5.500 5v-3h-4.500z" fill="#4a4a4a" stroke="#000" stroke-width="1"/><path d="M243 15l3.500 3.500c1 1 2.500-0.500 1.500-1.500l-3-3z" fill="#d4a878"/><circle cx="240.500" cy="11.500" r="4.600" fill="#cfdcf4" stroke="#98a8d4" stroke-width="1"/><path d="M229.500 13l8.500-5.500v3h4v5h-4v3z" fill="#7884d0" opacity="0.900"/><path d="M253.500 4v20" stroke="#a8a8a8"/><path d="M254.500 4v20" stroke="#fcfcfc"/><path d="M266 14h73.500" stroke="#787878" stroke-width="2"/><path d="M266 15.500h73.500" stroke="#fdfdfd" stroke-width="1"/><path d="M340 5.500h9.500v17l-4.500 2h-5z" fill="#f4f4f4"/><path d="M349.500 5v17l-4.500 2.500" fill="none" stroke="#606060" stroke-width="1.300"/><path d="M340 24v-18.500h9" fill="none" stroke="#fff" stroke-width="1"/></svg>
<div class="t b" style="left:284.500px;top:49px;font-size:14.500px;letter-spacing:-0.3px;transform:scaleX(0.86);transform-origin:0 0;-webkit-text-stroke:0.35px #000">3D</div>
<div style="left:277px;top:74px;width:812px;height:1px;background:#8a8a8a"></div>
<div style="left:277px;top:94px;width:794px;height:1px;background:#8a8a8a"></div>
<div style="left:277px;top:75px;width:1px;height:626px;background:#8a8a8a"></div>
<div style="left:298px;top:75px;width:1px;height:609px;background:#8a8a8a"></div>
<svg style="left:278px;top:75px" width="793" height="609" viewBox="0 0 793 609"><path d="M31.6 20v-3 M37.2 20v-3 M42.7 20v-5 M48.3 20v-3 M53.9 20v-3 M59.5 20v-3 M65.0 20v-3 M70.6 20v-7 M76.2 20v-3 M81.7 20v-3 M87.3 20v-3 M92.9 20v-3 M98.4 20v-5 M104.0 20v-3 M109.6 20v-3 M115.2 20v-3 M120.7 20v-3 M126.3 20v-7 M131.9 20v-3 M137.4 20v-3 M143.0 20v-3 M148.6 20v-3 M154.1 20v-5 M159.7 20v-3 M165.3 20v-3 M170.9 20v-3 M176.4 20v-3 M182.0 20v-7 M187.6 20v-3 M193.1 20v-3 M198.7 20v-3 M204.3 20v-3 M209.8 20v-5 M215.4 20v-3 M221.0 20v-3 M226.6 20v-3 M232.1 20v-3 M237.7 20v-7 M243.3 20v-3 M248.8 20v-3 M254.4 20v-3 M260.0 20v-3 M265.5 20v-5 M271.1 20v-3 M276.7 20v-3 M282.3 20v-3 M287.8 20v-3 M293.4 20v-7 M299.0 20v-3 M304.5 20v-3 M310.1 20v-3 M315.7 20v-3 M321.2 20v-5 M326.8 20v-3 M332.4 20v-3 M338.0 20v-3 M343.5 20v-3 M349.1 20v-7 M354.7 20v-3 M360.2 20v-3 M365.8 20v-3 M371.4 20v-3 M376.9 20v-5 M382.5 20v-3 M388.1 20v-3 M393.7 20v-3 M399.2 20v-3 M404.8 20v-7 M410.4 20v-3 M415.9 20v-3 M421.5 20v-3 M427.1 20v-3 M432.6 20v-5 M438.2 20v-3 M443.8 20v-3 M449.4 20v-3 M454.9 20v-3 M460.5 20v-7 M466.1 20v-3 M471.6 20v-3 M477.2 20v-3 M482.8 20v-3 M488.3 20v-5 M493.9 20v-3 M499.5 20v-3 M505.1 20v-3 M510.6 20v-3 M516.2 20v-7 M521.8 20v-3 M527.3 20v-3 M532.9 20v-3 M538.5 20v-3 M544.0 20v-5 M549.6 20v-3 M555.2 20v-3 M560.8 20v-3 M566.3 20v-3 M571.9 20v-7 M577.5 20v-3 M583.0 20v-3 M588.6 20v-3 M594.2 20v-3 M599.8 20v-5 M605.3 20v-3 M610.9 20v-3 M616.5 20v-3 M622.0 20v-3 M627.6 20v-7 M633.2 20v-3 M638.7 20v-3 M644.3 20v-3 M649.9 20v-3 M655.5 20v-5 M661.0 20v-3 M666.6 20v-3 M672.2 20v-3 M677.7 20v-3 M683.3 20v-7 M688.9 20v-3 M694.4 20v-3 M700.0 20v-3 M705.6 20v-3 M711.1 20v-5 M716.7 20v-3 M722.3 20v-3 M727.9 20v-3 M733.4 20v-3 M739.0 20v-7 M744.6 20v-3 M750.1 20v-3 M755.7 20v-3 M761.3 20v-3 M766.8 20v-5 M772.4 20v-3 M778.0 20v-3 M783.6 20v-3 M789.1 20v-3 M20 603.6h-3 M20 598.1h-3 M20 592.5h-7 M20 586.9h-3 M20 581.4h-3 M20 575.8h-3 M20 570.2h-3 M20 564.7h-5 M20 559.1h-3 M20 553.5h-3 M20 547.9h-3 M20 542.4h-3 M20 536.8h-7 M20 531.2h-3 M20 525.7h-3 M20 520.1h-3 M20 514.5h-3 M20 509.0h-5 M20 503.4h-3 M20 497.8h-3 M20 492.2h-3 M20 486.7h-3 M20 481.1h-7 M20 475.5h-3 M20 470.0h-3 M20 464.4h-3 M20 458.8h-3 M20 453.2h-5 M20 447.7h-3 M20 442.1h-3 M20 436.5h-3 M20 431.0h-3 M20 425.4h-7 M20 419.8h-3 M20 414.3h-3 M20 408.7h-3 M20 403.1h-3 M20 397.6h-5 M20 392.0h-3 M20 386.4h-3 M20 380.8h-3 M20 375.3h-3 M20 369.7h-7 M20 364.1h-3 M20 358.6h-3 M20 353.0h-3 M20 347.4h-3 M20 341.9h-5 M20 336.3h-3 M20 330.7h-3 M20 325.1h-3 M20 319.6h-3 M20 314.0h-7 M20 308.4h-3 M20 302.9h-3 M20 297.3h-3 M20 291.7h-3 M20 286.1h-5 M20 280.6h-3 M20 275.0h-3 M20 269.4h-3 M20 263.9h-3 M20 258.3h-7 M20 252.7h-3 M20 247.2h-3 M20 241.6h-3 M20 236.0h-3 M20 230.4h-5 M20 224.9h-3 M20 219.3h-3 M20 213.7h-3 M20 208.2h-3 M20 202.6h-7 M20 197.0h-3 M20 191.5h-3 M20 185.9h-3 M20 180.3h-3 M20 174.8h-5 M20 169.2h-3 M20 163.6h-3 M20 158.0h-3 M20 152.5h-3 M20 146.9h-7 M20 141.3h-3 M20 135.8h-3 M20 130.2h-3 M20 124.6h-3 M20 119.0h-5 M20 113.5h-3 M20 107.9h-3 M20 102.3h-3 M20 96.8h-3 M20 91.2h-7 M20 85.6h-3 M20 80.1h-3 M20 74.5h-3 M20 68.9h-3 M20 63.3h-5 M20 57.8h-3 M20 52.2h-3 M20 46.6h-3 M20 41.1h-3 M20 35.5h-7 M20 29.9h-3 M20 24.4h-3" stroke="#000" stroke-width="1.100" fill="none"/><path d="M609.500 1v19" stroke="#000" stroke-width="1.600"/><path d="M5 10h12M8 6v9M14 6v9" stroke="#bbb" stroke-width="1" stroke-dasharray="1.500 1"/><path d="M1 31.500h19" stroke="#000" stroke-width="1"/></svg>
<div class="rt" style="left:327.3px;top:76px">-1200</div>
<div class="rt" style="left:383.0px;top:76px">-1000</div>
<div class="rt" style="left:438.7px;top:76px">-800</div>
<div class="rt" style="left:494.4px;top:76px">-600</div>
<div class="rt" style="left:550.1px;top:76px">-400</div>
<div class="rt" style="left:605.8px;top:76px">-200</div>
<div class="rt" style="left:661.5px;top:76px">0</div>
<div class="rt" style="left:717.2px;top:76px">200</div>
<div class="rt" style="left:772.9px;top:76px">400</div>
<div class="rt" style="left:828.6px;top:76px">600</div>
<div class="rt" style="left:884.3px;top:76px">800</div>
<div class="rt" style="left:940.0px;top:76px">1000</div>
<div class="rt" style="left:1027px;top:77px;font-size:8.900px;width:auto;text-align:left">millimetres</div>
<div class="rt" style="left:266px;top:661.5px;transform:rotate(-90deg)">-1000</div>
<div class="rt" style="left:266px;top:605.8px;transform:rotate(-90deg)">-800</div>
<div class="rt" style="left:266px;top:550.1px;transform:rotate(-90deg)">-600</div>
<div class="rt" style="left:266px;top:494.4px;transform:rotate(-90deg)">-400</div>
<div class="rt" style="left:266px;top:438.7px;transform:rotate(-90deg)">-200</div>
<div class="rt" style="left:266px;top:383.0px;transform:rotate(-90deg)">0</div>
<div class="rt" style="left:266px;top:327.3px;transform:rotate(-90deg)">200</div>
<div class="rt" style="left:266px;top:271.6px;transform:rotate(-90deg)">400</div>
<div class="rt" style="left:266px;top:215.9px;transform:rotate(-90deg)">600</div>
<div class="rt" style="left:266px;top:160.2px;transform:rotate(-90deg)">800</div>
<div class="rt" style="left:266px;top:104.5px;transform:rotate(-90deg)">1000</div>
<div style="left:1071px;top:75px;width:18px;height:20px;background:#f0f0f0;border:1px solid #8a8a8a;border-top:none"></div>
<svg style="left:1071px;top:75px" width="18" height="20" viewBox="0 0 18 20"><path d="M4.500 11h9l-4.500 4.500z" fill="#000"/><path d="M5 8h3M10 8h3" stroke="#000" stroke-width="1.500"/></svg>
<div style="left:1072px;top:95px;width:17px;height:589px;background:#f0f0f0"></div>
<div style="left:1072px;top:112px;width:16px;height:556px;background:#cdcdcd"></div>
<svg style="left:1072px;top:96px" width="17" height="17" viewBox="0 0 17 17"><path d="M4.500 10.500l4-4l4 4" fill="none" stroke="#505050" stroke-width="1.800"/></svg>
<svg style="left:1072px;top:668px" width="17" height="17" viewBox="0 0 17 17"><path d="M4.500 6.500l4 4l4-4" fill="none" stroke="#505050" stroke-width="1.800"/></svg>
<div style="left:278px;top:684px;width:20px;height:17px;background:#f0f0f0;border:1px solid #8a8a8a;border-right-color:#aaa"></div>
<svg style="left:278px;top:684px" width="20" height="17" viewBox="0 0 20 17"><path d="M10 4.500l5 4.500l-5 4.500z" fill="#000"/><path d="M6.500 5v3M6.500 10v3" stroke="#000" stroke-width="1.500"/></svg>
<div style="left:299px;top:685px;width:773px;height:17px;background:#f0f0f0"></div>
<div style="left:315px;top:686px;width:739px;height:16px;background:#cdcdcd"></div>
<svg style="left:299px;top:685px" width="17" height="17" viewBox="0 0 17 17"><path d="M10 4.500l-4 4l4 4" fill="none" stroke="#505050" stroke-width="1.800"/></svg>
<svg style="left:1054px;top:685px" width="17" height="17" viewBox="0 0 17 17"><path d="M7 4.500l4 4l-4 4" fill="none" stroke="#505050" stroke-width="1.800"/></svg>
<div style="left:540px;top:106px;width:285px;height:567px;background:#ffff80;border:1px solid #000"></div>
<div style="left:577px;top:158px;width:212px;height:463px;background:#282828"></div>
<svg style="left:596px;top:178px" width="174" height="426" viewBox="596 178 174 426"><defs>
<radialGradient id="gb" cx="0.4" cy="0.35" r="0.7"><stop offset="0" stop-color="#dcdcdc"/><stop offset="0.6" stop-color="#a8a8a8"/><stop offset="1" stop-color="#6a6a6a"/></radialGradient>
<radialGradient id="gr"><stop offset="0" stop-color="#7c7c7c"/><stop offset="0.6" stop-color="#626262"/><stop offset="1" stop-color="#1c1c1c" stop-opacity="0"/></radialGradient>
<radialGradient id="gd" cx="0.5" cy="0.5" r="0.5"><stop offset="0" stop-color="#242424"/><stop offset="0.40" stop-color="#303030"/><stop offset="0.53" stop-color="#8c8c8c"/><stop offset="0.67" stop-color="#e2e2e2"/><stop offset="0.77" stop-color="#f0f0f0"/><stop offset="0.89" stop-color="#989898"/><stop offset="1" stop-color="#363636"/></radialGradient>
<linearGradient id="fl" x1="0" x2="1" y1="0" y2="0"><stop offset="0" stop-color="#8a8a8a"/><stop offset="0.14" stop-color="#d4d4d4"/><stop offset="0.34" stop-color="#b0b0b0"/><stop offset="0.40" stop-color="#707070"/><stop offset="0.46" stop-color="#b0b0b0"/><stop offset="0.66" stop-color="#a2a2a2"/><stop offset="0.8" stop-color="#6a6a6a"/><stop offset="1" stop-color="#343434"/></linearGradient>
<linearGradient id="ft" x1="0" x2="0" y1="0" y2="1"><stop offset="0" stop-color="#8a8a8a"/><stop offset="0.14" stop-color="#d4d4d4"/><stop offset="0.34" stop-color="#b0b0b0"/><stop offset="0.40" stop-color="#707070"/><stop offset="0.46" stop-color="#b0b0b0"/><stop offset="0.66" stop-color="#a2a2a2"/><stop offset="0.8" stop-color="#6a6a6a"/><stop offset="1" stop-color="#343434"/></linearGradient>
<radialGradient id="gn"><stop offset="0" stop-color="#222" stop-opacity="0.85"/><stop offset="1" stop-color="#222" stop-opacity="0"/></radialGradient>
<filter id="bl" x="-5%" y="-5%" width="110%" height="110%"><feGaussianBlur stdDeviation="0.45"/></filter>
<clipPath id="cq"><rect x="620" y="195" width="63.500" height="195"/></clipPath>
</defs><rect x="600.500" y="182.500" width="165" height="414.500" fill="#4a4a4a"/><path d="M601 183L614 196L614 583.5L601 596.5z" fill="url(#fl)"/><g transform="translate(1366,0) scale(-1,1)"><path d="M601 183L614 196L614 583.5L601 596.5z" fill="url(#fl)"/></g><path d="M601 183L765 183L752 196L614 196z" fill="url(#ft)"/><g transform="translate(0,779.5) scale(1,-1)"><path d="M601 183L765 183L752 196L614 196z" fill="url(#ft)"/></g><rect x="614" y="195.500" width="138" height="388" fill="#3a3a3a"/><rect x="613.500" y="196" width="1.500" height="387" fill="#e6e670"/><rect x="614" y="195.500" width="137" height="3" fill="#f2f278"/><rect x="614" y="579.500" width="137" height="4" fill="#f2f278"/><rect x="601" y="596" width="164" height="1.500" fill="#ecec74"/><rect x="615" y="198" width="136" height="383" fill="#242424"/><rect x="640" y="196" width="14" height="3" fill="#3a3a3a"/><rect x="712" y="196" width="14" height="3" fill="#3a3a3a"/><rect x="640" y="580" width="14" height="3.500" fill="#3a3a3a"/><rect x="712" y="580" width="14" height="3.500" fill="#3a3a3a"/><rect x="615" y="197" width="6" height="385" fill="#b2b2b2"/><rect x="619.500" y="197" width="1.500" height="385" fill="#7c7c7c"/><rect x="745" y="197" width="6" height="385" fill="#b2b2b2"/><rect x="745" y="197" width="1.500" height="385" fill="#7c7c7c"/><g filter="url(#bl)"><ellipse cx="683" cy="389.500" rx="36.500" ry="57" fill="url(#gd)"/><ellipse cx="683" cy="377" rx="9" ry="11" fill="url(#gn)"/><ellipse cx="683" cy="402" rx="9" ry="11" fill="url(#gn)"/><g id="cq1" clip-path="url(#cq)"><ellipse cx="652" cy="240" rx="20" ry="24" fill="url(#gr)"/><ellipse cx="647" cy="266" rx="16" ry="18" fill="url(#gr)"/><ellipse cx="640" cy="340" rx="10" ry="18" fill="url(#gr)" opacity="0.6"/><path d="M624 316 C622.500 345 622.500 370 623 389.500" fill="none" stroke="#3a3a3a" stroke-width="5.8" stroke-linecap="round" stroke-linejoin="round"/><path d="M624 316 C622.500 345 622.500 370 623 389.500" fill="none" stroke="#a6a6a6" stroke-width="4.2" stroke-linecap="round" stroke-linejoin="round"/><path d="M624 316 C622.500 345 622.500 370 623 389.500" fill="none" stroke="#d0d0d0" stroke-width="1.8" stroke-linecap="round" stroke-linejoin="round"/><path d="M621 198 C628 197 642 198 654 202 C644 206 633 206 627 211 C623 208 621 203 621 198z" fill="#b0b0b0" stroke="#3a3a3a" stroke-width="0.8" stroke-linejoin="round"/><path d="M638 197 C652 196 666 198 676 202 C664 205 650 205 640 202z" fill="#b6b6b6" stroke="#3a3a3a" stroke-width="0.8" stroke-linejoin="round"/><circle cx="623.5" cy="213" r="4.0" fill="#2e2e2e"/><circle cx="623.5" cy="213" r="3.2" fill="url(#gb)"/><path d="M675 207 C660 199 640 202 630 214 C622 226 621.500 241 626.500 251 C628.500 255 632 258 637 260" fill="none" stroke="#3a3a3a" stroke-width="11.0" stroke-linecap="round" stroke-linejoin="round"/><path d="M675 207 C660 199 640 202 630 214 C622 226 621.500 241 626.500 251 C628.500 255 632 258 637 260" fill="none" stroke="#a6a6a6" stroke-width="9.4" stroke-linecap="round" stroke-linejoin="round"/><path d="M675 207 C660 199 640 202 630 214 C622 226 621.500 241 626.500 251 C628.500 255 632 258 637 260" fill="none" stroke="#d0d0d0" stroke-width="4.0" stroke-linecap="round" stroke-linejoin="round"/><path d="M678 220 C664 211.500 648 213 640 221 C635 227 634 232 637 235" fill="none" stroke="#3a3a3a" stroke-width="9.4" stroke-linecap="round" stroke-linejoin="round"/><path d="M678 220 C664 211.500 648 213 640 221 C635 227 634 232 637 235" fill="none" stroke="#a6a6a6" stroke-width="7.8" stroke-linecap="round" stroke-linejoin="round"/><path d="M678 220 C664 211.500 648 213 640 221 C635 227 634 232 637 235" fill="none" stroke="#d0d0d0" stroke-width="3.3" stroke-linecap="round" stroke-linejoin="round"/><circle cx="636.5" cy="234.5" r="9.8" fill="#2e2e2e"/><circle cx="636.5" cy="234.5" r="9" fill="#a4a4a4"/><circle cx="636.5" cy="234.5" r="5.6" fill="none" stroke="#6a6a6a" stroke-width="2.0"/><circle cx="636.5" cy="234.5" r="3.2" fill="#d0d0d0"/><path d="M624 249 C629 258 636 263 643 264 C639 258 635 252 633 245z" fill="#b8b8b8" stroke="#3a3a3a" stroke-width="0.8" stroke-linejoin="round"/><circle cx="626.5" cy="264.5" r="6.3999999999999995" fill="#2e2e2e"/><circle cx="626.5" cy="264.5" r="5.6" fill="#a4a4a4"/><circle cx="626.5" cy="264.5" r="3.5" fill="none" stroke="#6a6a6a" stroke-width="1.2"/><circle cx="626.5" cy="264.5" r="2.0" fill="#d0d0d0"/><circle cx="627" cy="275.5" r="5.0" fill="#2e2e2e"/><circle cx="627" cy="275.5" r="4.2" fill="url(#gb)"/><circle cx="659" cy="275.5" r="5.2" fill="#2e2e2e"/><circle cx="659" cy="275.5" r="4.4" fill="url(#gb)"/><path d="M628 279 C630 289 636 293 640 298" fill="none" stroke="#3a3a3a" stroke-width="5.8" stroke-linecap="round" stroke-linejoin="round"/><path d="M628 279 C630 289 636 293 640 298" fill="none" stroke="#a6a6a6" stroke-width="4.2" stroke-linecap="round" stroke-linejoin="round"/><path d="M628 279 C630 289 636 293 640 298" fill="none" stroke="#d0d0d0" stroke-width="1.8" stroke-linecap="round" stroke-linejoin="round"/><path d="M658 280 C656 289 648 293 644 298" fill="none" stroke="#3a3a3a" stroke-width="5.8" stroke-linecap="round" stroke-linejoin="round"/><path d="M658 280 C656 289 648 293 644 298" fill="none" stroke="#a6a6a6" stroke-width="4.2" stroke-linecap="round" stroke-linejoin="round"/><path d="M658 280 C656 289 648 293 644 298" fill="none" stroke="#d0d0d0" stroke-width="1.8" stroke-linecap="round" stroke-linejoin="round"/><path d="M641.500 270 C647 276 647 284 644 288 C648 287 651 284 652.500 280 C653 288 648 294 642 298 C636 294 631 288 631 281 C633 285 636 287 639 288 C637 283 638 276 641.500 270z" fill="#c2c2c2" stroke="#3a3a3a" stroke-width="0.8" stroke-linejoin="round"/><circle cx="634" cy="303" r="12" fill="#3a3a3a"/><ellipse cx="641.0" cy="303" rx="5.5" ry="3.6" fill="#b8b8b8" stroke="#5a5a5a" stroke-width="0.5" transform="rotate(10 634 303)"/><ellipse cx="641.0" cy="303" rx="5.5" ry="3.6" fill="#b8b8b8" stroke="#5a5a5a" stroke-width="0.5" transform="rotate(61 634 303)"/><ellipse cx="641.0" cy="303" rx="5.5" ry="3.6" fill="#b8b8b8" stroke="#5a5a5a" stroke-width="0.5" transform="rotate(113 634 303)"/><ellipse cx="641.0" cy="303" rx="5.5" ry="3.6" fill="#b8b8b8" stroke="#5a5a5a" stroke-width="0.5" transform="rotate(164 634 303)"/><ellipse cx="641.0" cy="303" rx="5.5" ry="3.6" fill="#b8b8b8" stroke="#5a5a5a" stroke-width="0.5" transform="rotate(216 634 303)"/><ellipse cx="641.0" cy="303" rx="5.5" ry="3.6" fill="#b8b8b8" stroke="#5a5a5a" stroke-width="0.5" transform="rotate(267 634 303)"/><ellipse cx="641.0" cy="303" rx="5.5" ry="3.6" fill="#b8b8b8" stroke="#5a5a5a" stroke-width="0.5" transform="rotate(319 634 303)"/><circle cx="634" cy="303" r="3.1" fill="#c8c8c8" stroke="#555" stroke-width="0.5"/><circle cx="634" cy="303" r="3.6" fill="none" stroke="#c8c8c8" stroke-width="1.8"/><path d="M624 312 C628 316 634 317 637 314 C636 322 631 328 625 334 C623 326 622.500 318 624 312z" fill="#aaaaaa" stroke="#3a3a3a" stroke-width="0.8" stroke-linejoin="round"/><circle cx="668.5" cy="242" r="13" fill="#3a3a3a"/><ellipse cx="676.0" cy="242" rx="6.0" ry="3.9" fill="#b8b8b8" stroke="#5a5a5a" stroke-width="0.5" transform="rotate(12 668.5 242)"/><ellipse cx="676.0" cy="242" rx="6.0" ry="3.9" fill="#b8b8b8" stroke="#5a5a5a" stroke-width="0.5" transform="rotate(63 668.5 242)"/><ellipse cx="676.0" cy="242" rx="6.0" ry="3.9" fill="#b8b8b8" stroke="#5a5a5a" stroke-width="0.5" transform="rotate(115 668.5 242)"/><ellipse cx="676.0" cy="242" rx="6.0" ry="3.9" fill="#b8b8b8" stroke="#5a5a5a" stroke-width="0.5" transform="rotate(166 668.5 242)"/><ellipse cx="676.0" cy="242" rx="6.0" ry="3.9" fill="#b8b8b8" stroke="#5a5a5a" stroke-width="0.5" transform="rotate(218 668.5 242)"/><ellipse cx="676.0" cy="242" rx="6.0" ry="3.9" fill="#b8b8b8" stroke="#5a5a5a" stroke-width="0.5" transform="rotate(269 668.5 242)"/><ellipse cx="676.0" cy="242" rx="6.0" ry="3.9" fill="#b8b8b8" stroke="#5a5a5a" stroke-width="0.5" transform="rotate(321 668.5 242)"/><circle cx="668.5" cy="242" r="3.4" fill="#c8c8c8" stroke="#555" stroke-width="0.5"/><path d="M676 250 C679 256 681 262 683 268 L683 282 C678 280 675 276 674 270 C673 264 674 257 676 250z" fill="#a6a6a6" stroke="#3a3a3a" stroke-width="0.8" stroke-linejoin="round"/><path d="M684 274 L669 289.500" fill="none" stroke="#3a3a3a" stroke-width="12.8" stroke-linecap="butt" stroke-linejoin="round"/><path d="M684 274 L669 289.500" fill="none" stroke="#a6a6a6" stroke-width="11.2" stroke-linecap="butt" stroke-linejoin="round"/><path d="M684 274 L669 289.500" fill="none" stroke="#d0d0d0" stroke-width="4.7" stroke-linecap="butt" stroke-linejoin="round"/><path d="M663.5 258 C670 255.500 676 261 679 268 C681 272 683 275 687 279" fill="none" stroke="#3a3a3a" stroke-width="12.8" stroke-linecap="round" stroke-linejoin="round"/><path d="M663.5 258 C670 255.500 676 261 679 268 C681 272 683 275 687 279" fill="none" stroke="#a6a6a6" stroke-width="11.2" stroke-linecap="round" stroke-linejoin="round"/><path d="M663.5 258 C670 255.500 676 261 679 268 C681 272 683 275 687 279" fill="none" stroke="#d0d0d0" stroke-width="4.7" stroke-linecap="round" stroke-linejoin="round"/><circle cx="662.5" cy="258" r="6.3999999999999995" fill="#2e2e2e"/><circle cx="662.5" cy="258" r="5.6" fill="url(#gb)"/><path d="M652 306 C640 318 630 334 627.500 352 C626 364 627 374 632 381" fill="none" stroke="#3a3a3a" stroke-width="9.2" stroke-linecap="round" stroke-linejoin="round"/><path d="M652 306 C640 318 630 334 627.500 352 C626 364 627 374 632 381" fill="none" stroke="#a6a6a6" stroke-width="7.6" stroke-linecap="round" stroke-linejoin="round"/><path d="M652 306 C640 318 630 334 627.500 352 C626 364 627 374 632 381" fill="none" stroke="#d0d0d0" stroke-width="3.2" stroke-linecap="round" stroke-linejoin="round"/><path d="M670 287.500 L653.500 305" fill="none" stroke="#3a3a3a" stroke-width="14.0" stroke-linecap="butt" stroke-linejoin="round"/><path d="M670 287.500 L653.500 305" fill="none" stroke="#a6a6a6" stroke-width="12.4" stroke-linecap="butt" stroke-linejoin="round"/><path d="M670 287.500 L653.500 305" fill="none" stroke="#d0d0d0" stroke-width="5.2" stroke-linecap="butt" stroke-linejoin="round"/><path d="M656 294 l8 7.500 M653.500 297 l7.500 7 M659.500 290.500 l8 7.500" stroke="#4a4a4a" stroke-width="0.9" fill="none"/><path d="M658.500 315 C659 307 669 304 672 311 C675 318 664 324 656 328 C651 331 648 334 647 337" fill="none" stroke="#3a3a3a" stroke-width="5.8" stroke-linecap="round" stroke-linejoin="round"/><path d="M658.500 315 C659 307 669 304 672 311 C675 318 664 324 656 328 C651 331 648 334 647 337" fill="none" stroke="#a6a6a6" stroke-width="4.2" stroke-linecap="round" stroke-linejoin="round"/><path d="M658.500 315 C659 307 669 304 672 311 C675 318 664 324 656 328 C651 331 648 334 647 337" fill="none" stroke="#d0d0d0" stroke-width="1.8" stroke-linecap="round" stroke-linejoin="round"/><circle cx="658.5" cy="315.5" r="5.0" fill="#2e2e2e"/><circle cx="658.5" cy="315.5" r="4.2" fill="url(#gb)"/><circle cx="647.5" cy="336.5" r="5.0" fill="#2e2e2e"/><circle cx="647.5" cy="336.5" r="4.2" fill="url(#gb)"/><path d="M648 341 C644 346 641.500 352 640.500 358" fill="none" stroke="#3a3a3a" stroke-width="5.1" stroke-linecap="round" stroke-linejoin="round"/><path d="M648 341 C644 346 641.500 352 640.500 358" fill="none" stroke="#a6a6a6" stroke-width="3.5" stroke-linecap="round" stroke-linejoin="round"/><path d="M648 341 C644 346 641.500 352 640.500 358" fill="none" stroke="#d0d0d0" stroke-width="1.5" stroke-linecap="round" stroke-linejoin="round"/><path d="M630.500 344 C628.500 352 630.500 360 636.500 366" fill="none" stroke="#3a3a3a" stroke-width="5.1" stroke-linecap="round" stroke-linejoin="round"/><path d="M630.500 344 C628.500 352 630.500 360 636.500 366" fill="none" stroke="#a6a6a6" stroke-width="3.5" stroke-linecap="round" stroke-linejoin="round"/><path d="M630.500 344 C628.500 352 630.500 360 636.500 366" fill="none" stroke="#d0d0d0" stroke-width="1.5" stroke-linecap="round" stroke-linejoin="round"/><circle cx="634" cy="355" r="4.6" fill="#2e2e2e"/><circle cx="634" cy="355" r="3.8" fill="url(#gb)"/><path d="M641.500 371 C642 350 656 331 683 327.500" fill="none" stroke="#3a3a3a" stroke-width="8.7" stroke-linecap="round" stroke-linejoin="round"/><path d="M641.500 371 C642 350 656 331 683 327.500" fill="none" stroke="#a6a6a6" stroke-width="7.1" stroke-linecap="round" stroke-linejoin="round"/><path d="M641.500 371 C642 350 656 331 683 327.500" fill="none" stroke="#d0d0d0" stroke-width="3.0" stroke-linecap="round" stroke-linejoin="round"/><path d="M626 389.500 L662 389.500" fill="none" stroke="#3a3a3a" stroke-width="7.0" stroke-linecap="round" stroke-linejoin="round"/><path d="M626 389.500 L662 389.500" fill="none" stroke="#a6a6a6" stroke-width="5.4" stroke-linecap="round" stroke-linejoin="round"/><path d="M626 389.500 L662 389.500" fill="none" stroke="#d0d0d0" stroke-width="2.3" stroke-linecap="round" stroke-linejoin="round"/><ellipse cx="657" cy="383" rx="7.500" ry="3.400" fill="#ababab" stroke="#444" stroke-width="0.7" transform="rotate(8 649 387)"/><ellipse cx="657" cy="383" rx="7.500" ry="3.400" fill="#ababab" stroke="#444" stroke-width="0.7" transform="rotate(-22 649 387)"/><ellipse cx="657" cy="383" rx="7.500" ry="3.400" fill="#ababab" stroke="#444" stroke-width="0.7" transform="rotate(-52 649 387)"/><ellipse cx="657" cy="383" rx="7.500" ry="3.400" fill="#ababab" stroke="#444" stroke-width="0.7" transform="rotate(-82 649 387)"/><circle cx="638" cy="377.5" r="8.8" fill="#2e2e2e"/><circle cx="638" cy="377.5" r="8" fill="#a4a4a4"/><circle cx="638" cy="377.5" r="5.0" fill="none" stroke="#6a6a6a" stroke-width="1.8"/><circle cx="638" cy="377.5" r="2.9" fill="#d0d0d0"/><path d="M683 369 C681 375 678 377 676 377 C677 372 676 368 673 365 C670 370 670 377 673 381 C669 381 666 379 664 376 C662 381 660 385 652 389.500 L683 389.500z" fill="#bebebe" stroke="#3a3a3a" stroke-width="0.8" stroke-linejoin="round"/><path d="M664 389.500 L683 381 L683 389.500z" fill="#cfcfcf"/><circle cx="683" cy="366.5" r="3.5999999999999996" fill="#2e2e2e"/><circle cx="683" cy="366.5" r="2.8" fill="url(#gb)"/><path d="M675 197 C670 204 669 213 674 219 C677 223 681 225 683 227 L683 216 C679 212 677 206 678 198z" fill="#9c9c9c" stroke="#3a3a3a" stroke-width="0.8" stroke-linejoin="round"/><path d="M669 221 C675 221 680 226 683 233 L683 241 C680 235 675 229 668 228z" fill="#b4b4b4" stroke="#3a3a3a" stroke-width="0.8" stroke-linejoin="round"/></g><use href="#cq1" transform="translate(1366,0) scale(-1,1)"/><use href="#cq1" transform="translate(0,779) scale(1,-1)"/><use href="#cq1" transform="translate(1366,779) scale(-1,-1)"/><g><path d="M683 280 C694 289 694 304 683 313.500 C672 304 672 289 683 280z" fill="#b0b0b0" stroke="#2c2c2c" stroke-width="1.2"/><path d="M683 286 C689.500 292 689.500 302 683 308 C676.500 302 676.500 292 683 286z" fill="#c9c9c9" stroke="#707070" stroke-width="1.2"/><circle cx="683" cy="320.5" r="4.2" fill="#2e2e2e"/><circle cx="683" cy="320.5" r="3.4" fill="url(#gb)"/><path d="M677.500 196.500 L688.500 196.500 C689.500 204 688 211 683 217 C678 211 676.500 204 677.500 196.500z" fill="#f6f67c"/></g><g transform="translate(0,779) scale(1,-1)"><path d="M683 280 C694 289 694 304 683 313.500 C672 304 672 289 683 280z" fill="#b0b0b0" stroke="#2c2c2c" stroke-width="1.2"/><path d="M683 286 C689.500 292 689.500 302 683 308 C676.500 302 676.500 292 683 286z" fill="#c9c9c9" stroke="#707070" stroke-width="1.2"/><circle cx="683" cy="320.5" r="4.2" fill="#2e2e2e"/><circle cx="683" cy="320.5" r="3.4" fill="url(#gb)"/><path d="M677.500 196.500 L688.500 196.500 C689.500 204 688 211 683 217 C678 211 676.500 204 677.500 196.500z" fill="#f6f67c"/></g></g></svg>
<div style="left:278px;top:706px;width:811px;height:1px;background:#a0a0a0"></div>
<div style="left:298px;top:723px;width:26px;height:21px;background:#000"></div>
<div style="left:283px;top:711px;width:26px;height:20px;background:#fff;border:1px solid #000"></div>
<svg style="left:310px;top:709px" width="14" height="12" viewBox="0 0 14 12"><rect x="1" y="1.500" width="7" height="5.500" rx="2.500" fill="none" stroke="#000" stroke-width="1"/><rect x="4.500" y="4" width="7" height="5.500" rx="2.500" fill="none" stroke="#000" stroke-width="1"/></svg>
<div class="sw" style="left:333px;background:#fff"></div>
<div class="sw" style="left:368px;background:#000"></div>
<div class="sw" style="left:403px;background:#00ffff"></div>
<div class="sw" style="left:438px;background:#2f3fdc"></div>
<div class="sw" style="left:473px;background:#55b950"></div>
<div class="sw" style="left:508px;background:#dc1223"></div>
<div class="sw" style="left:543px;background:#a82be0"></div>
<div class="sw" style="left:578px;background:#ffff80"></div>
<div class="sw" style="left:613px;background:#b0a03a"></div>
<div class="sw" style="left:648px;background:#fcc917"></div>
<div class="sw" style="left:683px;background:#050505"></div>
<div class="sw" style="left:718px;background:#050505"></div>
<div class="sw" style="left:753px;background:#050505"></div>
<div class="sw" style="left:788px;background:#050505"></div>
<div class="sw" style="left:823px;background:#050505"></div>
<div class="sw" style="left:858px;background:#050505"></div>
<div class="sw" style="left:893px;background:#050505"></div>
<div class="sw" style="left:928px;background:#050505"></div>
<div class="sw" style="left:963px;background:#050505"></div>
<div class="sw" style="left:998px;background:#050505"></div>
<div class="sw" style="left:1033px;background:#050505"></div>
<svg style="left:1072px;top:708px" width="17" height="36" viewBox="0 0 17 36"><path d="M4.500 10.500l4-4l4 4M4.500 28.500l4 4l4-4" fill="none" stroke="#505050" stroke-width="1.800"/></svg>
<div style="left:1089px;top:44px;width:1px;height:702px;background:#f8f8f8"></div>
<div style="left:1090px;top:43px;width:3px;height:704px;background:#f0f0f0"></div>
<div style="left:1093px;top:43px;width:1px;height:704px;background:#a8a8a8"></div>
<div style="left:1094px;top:43px;width:1px;height:704px;background:#fff"></div>
<div style="left:1094px;top:43px;width:272px;height:1px;background:#e2e2e2"></div>
<div class="rh" style="left:1102px;top:45px;width:243px;height:15px;"><div class="t">Vectors</div><div class="rcb"></div></div>
<div class="rh" style="left:1102px;top:172px;width:243px;height:15px;"><div class="t">Bitmaps</div><div class="rcb"></div></div>
<div class="rh" style="left:1102px;top:253px;width:243px;height:15px;"><div class="t">Reliefs</div><div class="rcb"></div></div>
<div class="dd" style="left:1102px;top:62px;width:241px;height:22px;"><div class="t" style="left:1px;top:0px">Default Sheet</div><div class="ddb"></div></div>
<div class="dd" style="left:1102px;top:270px;width:241px;height:22px;"><div class="t" style="left:1px;top:0px">Front Relief</div><div class="ddb"></div></div>
<div class="lr" style="left:1102px;top:113px;width:243px;height:25px;"><div class='t' style='left:26px;top:6px'>Default Layer</div></div>
<div class="lr" style="left:1102px;top:213px;width:243px;height:24px;"><div class='t' style='left:26px;top:6px'>Bitmap Layer 1</div></div>
<div class="lr" style="left:1102px;top:320px;width:243px;height:26px;"><div class='t' style='left:47px;top:7px'>Relief Layer 1</div></div>
<svg style="left:1102px;top:89px" width="20" height="21" viewBox="0 0 20 21"><rect x="0.500" y="0.500" width="18" height="19" fill="#f4f4f4"/><path d="M0.500 20v-19.500h18" stroke="#fff" fill="none"/><path d="M1 19.500h18v-19" stroke="#888" fill="none"/><defs><linearGradient id="grn" x1="0" x2="1"><stop offset="0" stop-color="#dfe8f4"/><stop offset="1" stop-color="#7e98c0"/></linearGradient></defs><path d="M3 2h5l3 3v4h2l3 3v6h-13z" fill="url(#grn)"/><path d="M14 18l3-1v1.500l-3 1z" fill="#999"/></svg>
<svg style="left:1139px;top:92px" width="22" height="18" viewBox="0 0 22 18"><g transform="scale(0.8)"><ellipse cx="11" cy="15" rx="9" ry="2" fill="#999" opacity="0.400"/><path d="M2 5c0-2 1-3 3-3h4l2 2h6c1 0 2 1 2 2v1h-17z" fill="#f0d810"/><path d="M1 7h19l-4 8c-5 1.500-10 1.500-13 0z" fill="#fff040" stroke="#d8c010" stroke-width="0.600"/></g></svg>
<svg style="left:1173px;top:90px" width="22" height="19" viewBox="0 0 22 19"><ellipse cx="12" cy="16" rx="8" ry="1.800" fill="#999" opacity="0.400"/><path d="M2 2h14l1 1v13h-14l-1-1z" fill="#1f5fd0"/><rect x="4.500" y="2" width="9.500" height="6.500" fill="#e4e8f0"/><rect x="6" y="11" width="7.500" height="5" fill="#c8d4e8"/><rect x="7" y="12" width="2" height="3.500" fill="#1f5fd0"/></svg>
<svg style="left:1210px;top:89px" width="22" height="20" viewBox="0 0 22 20"><ellipse cx="12" cy="17" rx="8" ry="1.800" fill="#999" opacity="0.400"/><path d="M2 1l8 0l1 2l1 0l0 3l2 0l1 4l2 0l0 7l-11 0l-1-3l-2 0l0-4l-1 0z" fill="#c8a070"/><path d="M3 3l7 0M4 6l8 0M4 9l10 0M6 12l10 0M6 15l10 0" stroke="#a88050" stroke-width="0.800"/></svg>
<svg style="left:1251px;top:89px" width="14" height="20" viewBox="0 0 14 20"><path d="M1 1h8l3 3v14h-11z" fill="#8ea8d0"/><path d="M1 1h8l3 3v14h-11z" fill="url(#gbd)"/><defs><linearGradient id="gbd" x1="0" y1="0" x2="1" y2="1"><stop offset="0" stop-color="#e4ecf8"/><stop offset="1" stop-color="#6c88b8"/></linearGradient></defs><g transform="translate(6.5,9) scale(0.85)"><circle cx="0" cy="-1.500" r="5.500" fill="#fbd040"/><circle cx="-1.500" cy="-3" r="2.500" fill="#fff4b0"/><path d="M-3 2.500h6l-1 3h-4z" fill="#f0b020"/><rect x="-2" y="5.500" width="4" height="3" fill="#402010"/></g></svg>
<svg style="left:1288px;top:92px" width="18" height="18" viewBox="0 0 18 18"><g transform="scale(0.82)"><ellipse cx="9" cy="16" rx="6" ry="1.800" fill="#999" opacity="0.400"/><path d="M2 5l2 11c2 1.500 8 1.500 10 0l2-11z" fill="#4a8ae8"/><path d="M2 5l2 11c1 0.700 2 1 3 1.200l-1.500-12z" fill="#2a62c0"/><ellipse cx="9" cy="5" rx="7" ry="2.600" fill="#a8d0f8" stroke="#3a72d0" stroke-width="0.800"/></g></svg>
<svg style="left:1322px;top:89px" width="21" height="21" viewBox="0 0 21 21"><rect x="0.500" y="0.500" width="19" height="19" fill="#f8f4e8"/><path d="M0.500 20v-19.500h19" stroke="#8a8a8a" fill="none"/><path d="M1 19.500h19v-19" stroke="#fff" fill="none"/><g transform="translate(7,9) scale(0.95)"><circle cx="0" cy="-1.500" r="5.500" fill="#fbd040"/><circle cx="-1.500" cy="-3" r="2.500" fill="#fff4b0"/><path d="M-3 2.500h6l-1 3h-4z" fill="#f0b020"/><rect x="-2" y="5.500" width="4" height="3" fill="#402010"/></g><g transform="translate(14,7) scale(0.95)"><circle cx="0" cy="-1.500" r="5.500" fill="#fbd040"/><circle cx="-1.500" cy="-3" r="2.500" fill="#fff4b0"/><path d="M-3 2.500h6l-1 3h-4z" fill="#f0b020"/><rect x="-2" y="5.500" width="4" height="3" fill="#402010"/></g></svg>
<svg style="left:1106px;top:117px" width="17" height="17" viewBox="0 0 17 17"><rect x="0.500" y="0.500" width="16" height="16" fill="#ececec"/><path d="M0.500 17v-16.500h16" stroke="#fff" fill="none"/><path d="M1 16.500h16v-16" stroke="#999" fill="none"/><circle cx="8" cy="8.500" r="6.500" fill="#000"/></svg>
<svg style="left:1288px;top:117px" width="17" height="17" viewBox="0 0 17 17"><rect x="0.500" y="0.500" width="16" height="16" fill="#d8d8d8"/><path d="M0.500 17v-16.500h16" stroke="#fff" fill="none"/><path d="M1 16.500h16v-16" stroke="#888" fill="none"/><path d="M6 8v-2.500a3 3 0 0 1 6 0v2.500" fill="none" stroke="#fafafa" stroke-width="1.800"/><rect x="3.500" y="8" width="11" height="7.500" fill="#9a9a9a"/><path d="M9 14.500v-4M7 12l2-2l2 2" stroke="#111" stroke-width="1.300" fill="none"/></svg>
<svg style="left:1306px;top:117px" width="17" height="17" viewBox="0 0 17 17"><rect x="1" y="0.500" width="15.500" height="16" fill="#ececec"/><path d="M1.500 0v16M1.500 15.500h15" stroke="#000" stroke-width="1" stroke-dasharray="2 1.500" fill="none"/><path d="M14.500 2l-8 8" stroke="#000" stroke-width="2.400"/><path d="M4.500 12.500l1-6l5 5z" fill="#000"/></svg>
<svg style="left:1323px;top:117px" width="18" height="17" viewBox="0 0 18 17"><rect x="0.500" y="0.500" width="16" height="16" fill="#e8e8e8"/><path d="M0.500 17v-16.500h16" stroke="#fff" fill="none"/><path d="M1 16.500h16v-16" stroke="#999" fill="none"/><g transform="translate(8.5,7) scale(0.95)"><circle cx="0" cy="-1.500" r="5.500" fill="#fbd040"/><circle cx="-1.500" cy="-3" r="2.500" fill="#fff4b0"/><path d="M-3 2.500h6l-1 3h-4z" fill="#f0b020"/><rect x="-2" y="5.500" width="4" height="3" fill="#402010"/></g></svg>
<svg style="left:1311px;top:141px" width="13" height="13" viewBox="0 0 13 13"><rect x="0" y="0" width="13" height="13" rx="1.500" fill="#1d4fa0"/><rect x="0.500" y="0.500" width="12" height="12" rx="1.500" fill="none" stroke="#0c2f74" stroke-width="1"/><path d="M6.500 10.500v-7M3.500 6.500l3-3l3 3" stroke="#fff" stroke-width="1.800" fill="none"/></svg>
<svg style="left:1329px;top:141px" width="13" height="13" viewBox="0 0 13 13"><rect x="0" y="0" width="13" height="13" rx="1.500" fill="#1d4fa0"/><rect x="0.500" y="0.500" width="12" height="12" rx="1.500" fill="none" stroke="#0c2f74" stroke-width="1"/><path d="M6.500 2.500v7M3.500 6.500l3 3l3-3" stroke="#fff" stroke-width="1.800" fill="none"/></svg>
<svg style="left:1311px;top:349px" width="13" height="13" viewBox="0 0 13 13"><rect x="0" y="0" width="13" height="13" rx="1.500" fill="#1d4fa0"/><rect x="0.500" y="0.500" width="12" height="12" rx="1.500" fill="none" stroke="#0c2f74" stroke-width="1"/><path d="M6.500 10.500v-7M3.500 6.500l3-3l3 3" stroke="#fff" stroke-width="1.800" fill="none"/></svg>
<svg style="left:1329px;top:349px" width="13" height="13" viewBox="0 0 13 13"><rect x="0" y="0" width="13" height="13" rx="1.500" fill="#1d4fa0"/><rect x="0.500" y="0.500" width="12" height="12" rx="1.500" fill="none" stroke="#0c2f74" stroke-width="1"/><path d="M6.500 2.500v7M3.500 6.500l3 3l3-3" stroke="#fff" stroke-width="1.800" fill="none"/></svg>
<svg style="left:1102px;top:190px" width="18" height="20" viewBox="0 0 18 20"><defs><linearGradient id="grn" x1="0" x2="1"><stop offset="0" stop-color="#dfe8f4"/><stop offset="1" stop-color="#7e98c0"/></linearGradient></defs><path d="M3 2h5l3 3v4h2l3 3v6h-13z" fill="url(#grn)"/><path d="M14 18l3-1v1.500l-3 1z" fill="#999"/></svg>
<svg style="left:1133px;top:193px" width="22" height="18" viewBox="0 0 22 18"><g transform="scale(0.8)"><ellipse cx="11" cy="15" rx="9" ry="2" fill="#999" opacity="0.400"/><path d="M2 5c0-2 1-3 3-3h4l2 2h6c1 0 2 1 2 2v1h-17z" fill="#f0d810"/><path d="M1 7h19l-4 8c-5 1.500-10 1.500-13 0z" fill="#fff040" stroke="#d8c010" stroke-width="0.600"/></g></svg>
<svg style="left:1163px;top:191px" width="22" height="19" viewBox="0 0 22 19"><ellipse cx="12" cy="16" rx="8" ry="1.800" fill="#999" opacity="0.400"/><path d="M2 2h14l1 1v13h-14l-1-1z" fill="#1f5fd0"/><rect x="4.500" y="2" width="9.500" height="6.500" fill="#e4e8f0"/><rect x="6" y="11" width="7.500" height="5" fill="#c8d4e8"/><rect x="7" y="12" width="2" height="3.500" fill="#1f5fd0"/></svg>
<svg style="left:1196px;top:190px" width="22" height="20" viewBox="0 0 22 20"><ellipse cx="12" cy="17" rx="8" ry="1.800" fill="#999" opacity="0.400"/><path d="M2 1l8 0l1 2l1 0l0 3l2 0l1 4l2 0l0 7l-11 0l-1-3l-2 0l0-4l-1 0z" fill="#c8a070"/><path d="M3 3l7 0M4 6l8 0M4 9l10 0M6 12l10 0M6 15l10 0" stroke="#a88050" stroke-width="0.800"/></svg>
<svg style="left:1228px;top:191px" width="20" height="19" viewBox="0 0 20 19"><defs><linearGradient id="gclr" x1="0" y1="0" x2="1" y2="1"><stop offset="0" stop-color="#888"/><stop offset="1" stop-color="#f4f4f4"/></linearGradient></defs><rect x="2" y="1" width="12" height="14" fill="url(#gclr)"/><path d="M14 15l3-4v4l-2 3z" fill="#999"/></svg>
<svg style="left:1258px;top:190px" width="22" height="21" viewBox="0 0 22 21"><rect x="8" y="8" width="12" height="10" fill="#8088d8" stroke="#5058b0" stroke-width="0.600"/><rect x="2" y="1" width="11" height="13" fill="#6a6a28"/><rect x="2" y="1" width="11" height="5" fill="#b0a860"/><path d="M4 14c0-4 1-6 3.500-6s3.500 2 3.500 6z" fill="#2a1a10"/><ellipse cx="7.500" cy="6" rx="2.200" ry="2.800" fill="#e8c088"/><path d="M4.500 8c-0.500-4 1-6 3-6s3.500 2 3 6c0-3-1-4-3-4s-3 1-3 4z" fill="#3a2010"/></svg>
<svg style="left:1293px;top:192px" width="18" height="18" viewBox="0 0 18 18"><g transform="scale(0.82)"><ellipse cx="9" cy="16" rx="6" ry="1.800" fill="#999" opacity="0.400"/><path d="M2 5l2 11c2 1.500 8 1.500 10 0l2-11z" fill="#4a8ae8"/><path d="M2 5l2 11c1 0.700 2 1 3 1.200l-1.500-12z" fill="#2a62c0"/><ellipse cx="9" cy="5" rx="7" ry="2.600" fill="#a8d0f8" stroke="#3a72d0" stroke-width="0.800"/></g></svg>
<svg style="left:1322px;top:189px" width="21" height="21" viewBox="0 0 21 21"><rect x="0.500" y="0.500" width="19" height="19" fill="#f8f4e8"/><path d="M0.500 20v-19.500h19" stroke="#8a8a8a" fill="none"/><path d="M1 19.500h19v-19" stroke="#fff" fill="none"/><g transform="translate(7,9) scale(0.95)"><circle cx="0" cy="-1.500" r="5.500" fill="#fbd040"/><circle cx="-1.500" cy="-3" r="2.500" fill="#fff4b0"/><path d="M-3 2.500h6l-1 3h-4z" fill="#f0b020"/><rect x="-2" y="5.500" width="4" height="3" fill="#402010"/></g><g transform="translate(14,7) scale(0.95)"><circle cx="0" cy="-1.500" r="5.500" fill="#fbd040"/><circle cx="-1.500" cy="-3" r="2.500" fill="#fff4b0"/><path d="M-3 2.500h6l-1 3h-4z" fill="#f0b020"/><rect x="-2" y="5.500" width="4" height="3" fill="#402010"/></g></svg>
<svg style="left:1106px;top:217px" width="16" height="17" viewBox="0 0 16 17"><rect x="0" y="0" width="16" height="17" fill="#7a7a30"/><rect x="0" y="0" width="16" height="7" fill="#c0b870"/><path d="M2 17c0-6 2-8 6-8s6 2 6 8z" fill="#2a1a10"/><ellipse cx="8" cy="7" rx="3" ry="3.800" fill="#ecc890"/><path d="M4 10c-1-6 1-9 4-9s5 3 4 9c0-4-1.500-6-4-6s-4 2-4 6z" fill="#3a2010"/><path d="M6 14h4v3h-4z" fill="#d8b078"/></svg>
<svg style="left:1102px;top:297px" width="18" height="20" viewBox="0 0 18 20"><defs><linearGradient id="grn" x1="0" x2="1"><stop offset="0" stop-color="#dfe8f4"/><stop offset="1" stop-color="#7e98c0"/></linearGradient></defs><path d="M3 2h5l3 3v4h2l3 3v6h-13z" fill="url(#grn)"/><path d="M14 18l3-1v1.500l-3 1z" fill="#999"/></svg>
<svg style="left:1129px;top:300px" width="22" height="18" viewBox="0 0 22 18"><g transform="scale(0.8)"><ellipse cx="11" cy="15" rx="9" ry="2" fill="#999" opacity="0.400"/><path d="M2 5c0-2 1-3 3-3h4l2 2h6c1 0 2 1 2 2v1h-17z" fill="#f0d810"/><path d="M1 7h19l-4 8c-5 1.500-10 1.500-13 0z" fill="#fff040" stroke="#d8c010" stroke-width="0.600"/></g></svg>
<svg style="left:1154px;top:298px" width="22" height="19" viewBox="0 0 22 19"><ellipse cx="12" cy="16" rx="8" ry="1.800" fill="#999" opacity="0.400"/><path d="M2 2h14l1 1v13h-14l-1-1z" fill="#1f5fd0"/><rect x="4.500" y="2" width="9.500" height="6.500" fill="#e4e8f0"/><rect x="6" y="11" width="7.500" height="5" fill="#c8d4e8"/><rect x="7" y="12" width="2" height="3.500" fill="#1f5fd0"/></svg>
<svg style="left:1183px;top:297px" width="22" height="20" viewBox="0 0 22 20"><ellipse cx="12" cy="17" rx="8" ry="1.800" fill="#999" opacity="0.400"/><path d="M2 1l8 0l1 2l1 0l0 3l2 0l1 4l2 0l0 7l-11 0l-1-3l-2 0l0-4l-1 0z" fill="#c8a070"/><path d="M3 3l7 0M4 6l8 0M4 9l10 0M6 12l10 0M6 15l10 0" stroke="#a88050" stroke-width="0.800"/></svg>
<svg style="left:1210px;top:297px" width="22" height="20" viewBox="0 0 22 20"><path d="M3 13l8-4l9 4l-8 5z" fill="#a01818"/><path d="M2 7l9-5l10 5l-9 5z" fill="#8890e0" stroke="#6870c0" stroke-width="0.500"/><path d="M9 11l2 4l3-4z" fill="#f0c020"/></svg>
<svg style="left:1241px;top:297px" width="14" height="20" viewBox="0 0 14 20"><path d="M1 1h8l3 3v14h-11z" fill="#8ea8d0"/><path d="M1 1h8l3 3v14h-11z" fill="url(#gbd)"/><defs><linearGradient id="gbd" x1="0" y1="0" x2="1" y2="1"><stop offset="0" stop-color="#e4ecf8"/><stop offset="1" stop-color="#6c88b8"/></linearGradient></defs><g transform="translate(6.5,9) scale(0.85)"><circle cx="0" cy="-1.500" r="5.500" fill="#fbd040"/><circle cx="-1.500" cy="-3" r="2.500" fill="#fff4b0"/><path d="M-3 2.500h6l-1 3h-4z" fill="#f0b020"/><rect x="-2" y="5.500" width="4" height="3" fill="#402010"/></g></svg>
<svg style="left:1270px;top:300px" width="18" height="18" viewBox="0 0 18 18"><g transform="scale(0.8)"><rect x="0" y="0" width="18" height="18" fill="#050505"/><circle cx="5.500" cy="4.500" r="1.800" fill="#9a9a9a"/><circle cx="12.500" cy="4.500" r="1.800" fill="#9a9a9a"/><ellipse cx="9" cy="7" rx="3.800" ry="3" fill="#c4c4c4"/><ellipse cx="9" cy="13" rx="5.500" ry="4.500" fill="#a4a4a4"/><ellipse cx="9" cy="14" rx="3" ry="2.500" fill="#ddd"/></g></svg>
<svg style="left:1297px;top:300px" width="18" height="18" viewBox="0 0 18 18"><g transform="scale(0.82)"><ellipse cx="9" cy="16" rx="6" ry="1.800" fill="#999" opacity="0.400"/><path d="M2 5l2 11c2 1.500 8 1.500 10 0l2-11z" fill="#4a8ae8"/><path d="M2 5l2 11c1 0.700 2 1 3 1.200l-1.500-12z" fill="#2a62c0"/><ellipse cx="9" cy="5" rx="7" ry="2.600" fill="#a8d0f8" stroke="#3a72d0" stroke-width="0.800"/></g></svg>
<svg style="left:1322px;top:297px" width="21" height="21" viewBox="0 0 21 21"><rect x="0.500" y="0.500" width="19" height="19" fill="#f8f4e8"/><path d="M0.500 20v-19.500h19" stroke="#8a8a8a" fill="none"/><path d="M1 19.500h19v-19" stroke="#fff" fill="none"/><g transform="translate(7,9) scale(0.95)"><circle cx="0" cy="-1.500" r="5.500" fill="#fbd040"/><circle cx="-1.500" cy="-3" r="2.500" fill="#fff4b0"/><path d="M-3 2.500h6l-1 3h-4z" fill="#f0b020"/><rect x="-2" y="5.500" width="4" height="3" fill="#402010"/></g><g transform="translate(14,7) scale(0.95)"><circle cx="0" cy="-1.500" r="5.500" fill="#fbd040"/><circle cx="-1.500" cy="-3" r="2.500" fill="#fff4b0"/><path d="M-3 2.500h6l-1 3h-4z" fill="#f0b020"/><rect x="-2" y="5.500" width="4" height="3" fill="#402010"/></g></svg>
<svg style="left:1110px;top:323px" width="26" height="22" viewBox="0 0 26 22"><path d="M3 14c1-8 7-11 13-9c4 1.500 6 5 6 9l-4 1c0-3-2-6-5-6.500c-4-0.500-6 2-6 6z" fill="#d8b860"/><path d="M3 14c1-8 7-11 13-9c-5 0-9 3-10 9z" fill="#f0dca0"/><path d="M7 14.500c0-4 2-6.500 6-6c3 0.500 5 3.500 5 6.500z" fill="#8088d0"/><path d="M1 17.500h8M5 13.500v8" stroke="#000" stroke-width="1.100"/></svg>
<svg style="left:1139px;top:329px" width="6" height="9" viewBox="0 0 6 9"><path d="M0.500 0.500l4.500 4l-4.500 4z" fill="#000"/></svg>
<svg style="left:1323px;top:325px" width="18" height="17" viewBox="0 0 18 17"><rect x="0.500" y="0.500" width="16" height="16" fill="#e8e8e8"/><path d="M0.500 17v-16.500h16" stroke="#fff" fill="none"/><path d="M1 16.500h16v-16" stroke="#999" fill="none"/><g transform="translate(8.5,7) scale(0.95)"><circle cx="0" cy="-1.500" r="5.500" fill="#fbd040"/><circle cx="-1.500" cy="-3" r="2.500" fill="#fff4b0"/><path d="M-3 2.500h6l-1 3h-4z" fill="#f0b020"/><rect x="-2" y="5.500" width="4" height="3" fill="#402010"/></g></svg>
<div style="left:1095px;top:721px;width:271px;height:26px;background:#cfcfcf"><svg width="100%" height="100%" style="left:0;top:0"><filter id="nz" x="0" y="0" width="100%" height="100%"><feTurbulence type="fractalNoise" baseFrequency="0.28" numOctaves="2" seed="3"/><feColorMatrix type="matrix" values="0 0 0 0 1  0 0 0 0 1  0 0 0 0 1  3 0 0 0 -1.2"/></filter><rect width="100%" height="100%" filter="url(#nz)" opacity="0.5"/></svg></div>
<div style="left:1095px;top:721px;width:49px;height:26px;background:#f0f0f0;border-radius:0 0 6px 6px"></div>
<div style="left:1143px;top:721px;width:49px;height:25px;background:#f5f5f5;border:1px solid #9a9a9a;border-top:1px solid #c8c8c8;border-radius:0 0 6px 6px"></div>
<div style="left:1192px;top:721px;width:174px;height:1px;background:#a8a8a8"></div>
<div style="left:1094px;top:746px;width:272px;height:1px;background:#a6a6a6"></div>
<div class="tab" style="left:1103px;top:726px;font-size:11.300px">Layers</div><div class="tab" style="left:1151px;top:727px;font-size:11.800px">Add In</div>
<div class="sb" style="left:1023px;top:751px;width:66px;height:18px;"></div>
<div class="sb" style="left:1092px;top:751px;width:66px;height:18px;"></div>
<div class="sb" style="left:1161px;top:751px;width:60px;height:18px;"></div>
<div class="sb" style="left:1224px;top:751px;width:70px;height:18px;"></div>
<div class="sb" style="left:1297px;top:751px;width:70px;height:18px;"></div>
<div class="t" style="left:1025px;top:753px;font-size:11px">X: 735.774</div><div class="t" style="left:1094px;top:753px;font-size:11px">Y: 1014.563</div>
</body></html>
